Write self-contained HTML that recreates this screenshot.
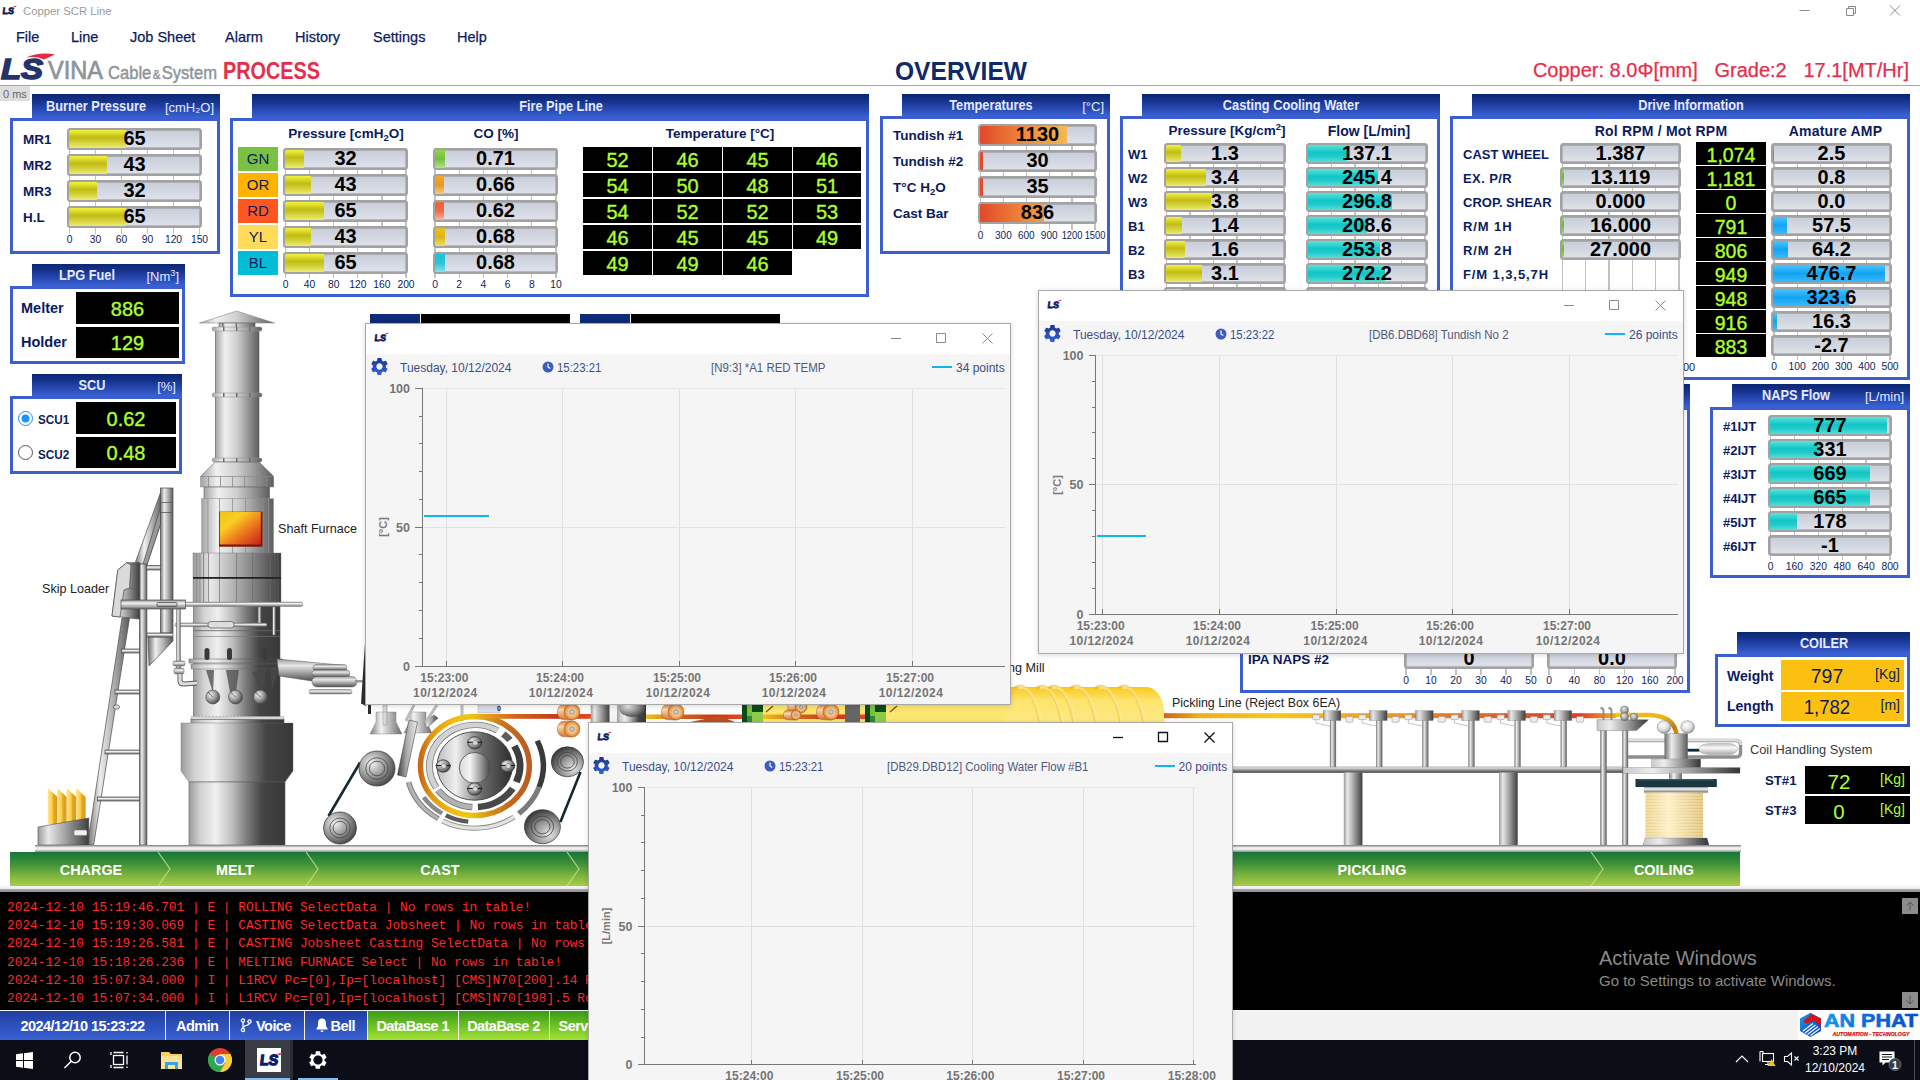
<!DOCTYPE html>
<html lang="en"><head><meta charset="utf-8"><title>Copper SCR Line</title>
<style>
html,body{margin:0;padding:0;background:#fff}
body{width:1920px;height:1080px;overflow:hidden;position:relative;font-family:"Liberation Sans",sans-serif}
#root{position:absolute;left:0;top:0;width:1920px;height:1080px;overflow:hidden;background:#fff}
#root div,#root svg{position:absolute;box-sizing:content-box}
#root span{position:relative}
.tab{background:linear-gradient(180deg,#0c2672 0%,#15328c 30%,#2a4cb8 70%,#3a62d4 100%)}
.pbody{border:3px solid #3b5fd0;background:#fff}
.g{border:2px solid #a2a2a2;border-radius:3.5px;background:linear-gradient(180deg,#c9cdd9 0,#d1d5e0 40%,#dfe2ea 100%);overflow:hidden;box-shadow:inset 0 0 0 .5px #8e8e8e}
.g i{position:absolute;left:0;top:0;bottom:0;display:block}
.g b{position:absolute;left:0;right:0;top:0;text-align:center;color:#000;font-weight:700}
.win{border:1px solid #a9a9a9;background:#f5f5f5;box-shadow:0 1px 5px rgba(0,0,0,.16);overflow:hidden}
</style></head><body><div id="root">
<div style="left:0px;top:0px;width:1920px;height:23px;background:#fff"></div>
<svg style="left:2px;top:4px" width="15" height="12" viewBox="0 0 44 26">
<g transform="skewX(-7)"><text x="4" y="24" font-family="Liberation Sans, sans-serif" font-size="27" font-weight="700" fill="#0b1b5e" stroke="#0b1b5e" stroke-width="2.4" textLength="33" lengthAdjust="spacingAndGlyphs">LS</text></g>
<path d="M31 3.500 Q38 0 44 0.500 L38 5 Q35 3 31 3.500Z" fill="#e8283c"/></svg>
<div style="left:23px;top:4.0px;line-height:15px;height:15px;font-size:11.3px;color:#9a9a9a;font-weight:400;white-space:nowrap;">Copper SCR Line</div>
<svg style="left:1780px;top:0" width="140" height="23" viewBox="0 0 140 23" fill="none" stroke="#8a8a8a" stroke-width="1">
<path d="M19.5 10.5h10"/><path d="M66.500 8.500h7v7h-7z M68.500 8.500v-2h7v7h-2"/><path d="M110 5.500l10 10M120 5.500l-10 10"/></svg>
<div style="left:16px;top:27.5px;line-height:19px;height:19px;font-size:14.5px;color:#0b1b5e;font-weight:400;white-space:nowrap;-webkit-text-stroke:0.25px #0b1b5e;">File</div>
<div style="left:71px;top:27.5px;line-height:19px;height:19px;font-size:14.5px;color:#0b1b5e;font-weight:400;white-space:nowrap;-webkit-text-stroke:0.25px #0b1b5e;">Line</div>
<div style="left:130px;top:27.5px;line-height:19px;height:19px;font-size:14.5px;color:#0b1b5e;font-weight:400;white-space:nowrap;-webkit-text-stroke:0.25px #0b1b5e;">Job Sheet</div>
<div style="left:225px;top:27.5px;line-height:19px;height:19px;font-size:14.5px;color:#0b1b5e;font-weight:400;white-space:nowrap;-webkit-text-stroke:0.25px #0b1b5e;">Alarm</div>
<div style="left:295px;top:27.5px;line-height:19px;height:19px;font-size:14.5px;color:#0b1b5e;font-weight:400;white-space:nowrap;-webkit-text-stroke:0.25px #0b1b5e;">History</div>
<div style="left:373px;top:27.5px;line-height:19px;height:19px;font-size:14.5px;color:#0b1b5e;font-weight:400;white-space:nowrap;-webkit-text-stroke:0.25px #0b1b5e;">Settings</div>
<div style="left:457px;top:27.5px;line-height:19px;height:19px;font-size:14.5px;color:#0b1b5e;font-weight:400;white-space:nowrap;-webkit-text-stroke:0.25px #0b1b5e;">Help</div>
<svg style="left:0;top:52px" width="330" height="34" viewBox="0 0 330 34">
<text x="1" y="26.500" font-family="Liberation Sans, sans-serif" font-size="30" font-weight="700" font-style="italic" fill="#26336a" stroke="#26336a" stroke-width="1.6" textLength="42" lengthAdjust="spacingAndGlyphs">LS</text>
<path d="M26 5.500 Q40 -0.500 55 2.500 L44 7.500 Q36 4 26 5.500Z" fill="#e8283c"/>
<text x="48" y="26.500" font-family="Liberation Sans, sans-serif" font-size="25" fill="#8e9499" stroke="#8e9499" stroke-width=".7" textLength="55" lengthAdjust="spacingAndGlyphs">VINA</text>
<text x="108" y="26.500" font-family="Liberation Sans, sans-serif" font-size="18" fill="#8e9499" stroke="#8e9499" stroke-width=".45" textLength="109" lengthAdjust="spacingAndGlyphs">Cable<tspan font-size="12.5" dx="1.5">&amp;</tspan><tspan dx="1.5">System</tspan></text>
<text x="223" y="26.500" font-family="Liberation Sans, sans-serif" font-size="23" font-weight="700" fill="#e62e4a" textLength="97" lengthAdjust="spacingAndGlyphs">PROCESS</text>
</svg>
<div style="left:810.5px;top:53.5px;line-height:34px;height:34px;font-size:26px;color:#10296b;font-weight:700;white-space:nowrap;width:300px;text-align:center;transform:scaleX(0.945);transform-origin:50% 50%;">OVERVIEW</div>
<div style="left:1409px;top:56.5px;line-height:26px;height:26px;font-size:20px;color:#e62e4a;font-weight:400;white-space:nowrap;width:500px;text-align:right;-webkit-text-stroke:.25px #e62e4a;">Copper: 8.0Φ[mm]&nbsp;&nbsp; Grade:2&nbsp;&nbsp; 17.1[MT/Hr]</div>
<div style="left:0px;top:85px;width:1920px;height:1px;background:#a8a8a8"></div>
<div style="left:0px;top:86px;width:30px;height:15px;background:#dedede"></div>
<div style="left:3px;top:87.0px;line-height:14px;height:14px;font-size:11px;color:#666;font-weight:400;white-space:nowrap;">0 ms</div>
<svg style="left:0;top:290px" width="1920" height="570" viewBox="0 290 1920 570">
<defs>
<linearGradient id="mL" x1="0" x2="1" y1="0" y2="0"><stop offset="0" stop-color="#a2a2a2"/><stop offset=".22" stop-color="#f0f0f0"/><stop offset=".5" stop-color="#cecece"/><stop offset="1" stop-color="#5e5e5e"/></linearGradient>
<linearGradient id="mM" x1="0" x2="1" y1="0" y2="0"><stop offset="0" stop-color="#9a9a9a"/><stop offset=".2" stop-color="#e8e8e8"/><stop offset=".55" stop-color="#a0a0a0"/><stop offset="1" stop-color="#3e3e3e"/></linearGradient>
<linearGradient id="mD" x1="0" x2="1" y1="0" y2="0"><stop offset="0" stop-color="#9c9c9c"/><stop offset=".12" stop-color="#d2d2d2"/><stop offset=".28" stop-color="#f0f0f0"/><stop offset=".45" stop-color="#bebebe"/><stop offset=".6" stop-color="#7e7e7e"/><stop offset=".76" stop-color="#444444"/><stop offset="1" stop-color="#383838"/></linearGradient>
<linearGradient id="mP" x1="0" x2="1" y1="0" y2="0"><stop offset="0" stop-color="#7c7c7c"/><stop offset=".35" stop-color="#f2f2f2"/><stop offset="1" stop-color="#6a6a6a"/></linearGradient>
<linearGradient id="mPd" x1="0" x2="1" y1="0" y2="0"><stop offset="0" stop-color="#6e6e6e"/><stop offset=".3" stop-color="#ededed"/><stop offset=".6" stop-color="#b4b4b4"/><stop offset="1" stop-color="#5a5a5a"/></linearGradient>
<linearGradient id="mHd" x1="0" x2="1" y1="0" y2="0"><stop offset="0" stop-color="#c8c8c8"/><stop offset=".25" stop-color="#ededed"/><stop offset=".6" stop-color="#9a9a9a"/><stop offset="1" stop-color="#343434"/></linearGradient>
<linearGradient id="mVl" x1="0" x2="0" y1="0" y2="1"><stop offset="0" stop-color="#bdbdbd"/><stop offset=".4" stop-color="#fafafa"/><stop offset="1" stop-color="#a8a8a8"/></linearGradient>
<linearGradient id="mRail" x1="0" x2="0" y1="0" y2="1"><stop offset="0" stop-color="#b4b4b4"/><stop offset=".25" stop-color="#dadada"/><stop offset=".6" stop-color="#8c8c8c"/><stop offset="1" stop-color="#3e3e3e"/></linearGradient>
<linearGradient id="wcv" x1="0" x2="1" y1="0" y2="1"><stop offset="0" stop-color="#f2c41c"/><stop offset=".45" stop-color="#eab21a"/><stop offset=".75" stop-color="#c07c10"/><stop offset="1" stop-color="#e29a14"/></linearGradient>
<radialGradient id="pulM" cx=".4" cy=".35" r=".7"><stop offset="0" stop-color="#e8e8e8"/><stop offset=".6" stop-color="#a4a4a4"/><stop offset="1" stop-color="#5c5c5c"/></radialGradient>
<radialGradient id="pulL" cx=".4" cy=".35" r=".7"><stop offset="0" stop-color="#ffffff"/><stop offset=".6" stop-color="#dcdcdc"/><stop offset="1" stop-color="#8c8c8c"/></radialGradient>
<linearGradient id="mV" x1="0" x2="0" y1="0" y2="1"><stop offset="0" stop-color="#8a8a8a"/><stop offset=".35" stop-color="#f4f4f4"/><stop offset="1" stop-color="#6e6e6e"/></linearGradient>
<linearGradient id="mVd" x1="0" x2="0" y1="0" y2="1"><stop offset="0" stop-color="#9a9a9a"/><stop offset=".3" stop-color="#e8e8e8"/><stop offset="1" stop-color="#505050"/></linearGradient>
<linearGradient id="fire" x1="0" x2="1" y1="0" y2="1"><stop offset="0" stop-color="#f4c01c"/><stop offset=".3" stop-color="#f8d020"/><stop offset=".6" stop-color="#ee7a1c"/><stop offset="1" stop-color="#c4201c"/></linearGradient>
<linearGradient id="cath" x1="0" x2="1" y1="0" y2="0"><stop offset="0" stop-color="#ffe896"/><stop offset=".5" stop-color="#fbc83c"/><stop offset="1" stop-color="#e39a1c"/></linearGradient>
<linearGradient id="ring" x1="0" x2="1" y1="0" y2="0"><stop offset="0" stop-color="#c86818"/><stop offset=".1" stop-color="#e09814"/><stop offset=".3" stop-color="#f4bc10"/><stop offset=".46" stop-color="#ecc810"/><stop offset=".62" stop-color="#d8961a"/><stop offset=".82" stop-color="#c4681e"/><stop offset="1" stop-color="#bc5c20"/></linearGradient>
<linearGradient id="bar" x1="0" x2="1" y1="0" y2="0"><stop offset="0" stop-color="#f0c018"/><stop offset=".35" stop-color="#d4641c"/><stop offset=".7" stop-color="#c8381c"/><stop offset="1" stop-color="#e84a24"/></linearGradient>
<linearGradient id="wire" x1="0" x2="1" y1="0" y2="0"><stop offset="0" stop-color="#d4601c"/><stop offset=".08" stop-color="#f0b018"/><stop offset=".25" stop-color="#f4c81c"/><stop offset=".5" stop-color="#ee9a20"/><stop offset=".75" stop-color="#e05a28"/><stop offset=".92" stop-color="#e23c28"/><stop offset="1" stop-color="#f0b018"/></linearGradient>
<linearGradient id="tube" x1="0" x2="0" y1="0" y2="1"><stop offset="0" stop-color="#f8c81c"/><stop offset=".25" stop-color="#fde46c"/><stop offset="1" stop-color="#fcec98"/></linearGradient>
<radialGradient id="pul" cx=".35" cy=".35" r=".75"><stop offset="0" stop-color="#f4f4f4"/><stop offset=".5" stop-color="#9a9a9a"/><stop offset="1" stop-color="#3a3a3a"/></radialGradient>
<radialGradient id="pulR" cx=".68" cy=".72" r=".8"><stop offset="0" stop-color="#e6e6e6"/><stop offset=".45" stop-color="#9a9a9a"/><stop offset="1" stop-color="#2e2e2e"/></radialGradient>
<linearGradient id="mTb" x1="0" x2="1" y1="0" y2="0"><stop offset="0" stop-color="#3c3c3c"/><stop offset=".45" stop-color="#a8a8a8"/><stop offset="1" stop-color="#ececec"/></linearGradient>
<linearGradient id="rollB" x1="0" x2="0" y1="0" y2="1"><stop offset="0" stop-color="#d87830"/><stop offset=".35" stop-color="#fad8b0"/><stop offset="1" stop-color="#d0702c"/></linearGradient>
<linearGradient id="disc" x1="0" x2="1" y1="0" y2="0"><stop offset="0" stop-color="#bcbcbc"/><stop offset=".25" stop-color="#f0f0f0"/><stop offset=".6" stop-color="#6a6a6a"/><stop offset="1" stop-color="#2c2c2c"/></linearGradient>
<linearGradient id="hub" x1="0" x2="1" y1="0" y2="0"><stop offset="0" stop-color="#d8d8d8"/><stop offset=".35" stop-color="#f4f4f4"/><stop offset="1" stop-color="#4a4a4a"/></linearGradient>
<radialGradient id="roll" cx=".5" cy=".5" r=".5"><stop offset="0" stop-color="#8a8a8a"/><stop offset=".22" stop-color="#d0d0d0"/><stop offset=".3" stop-color="#f8d8a8"/><stop offset=".7" stop-color="#f0a860"/><stop offset="1" stop-color="#d87830"/></radialGradient>
<linearGradient id="coil" x1="0" x2="1" y1="0" y2="0"><stop offset="0" stop-color="#e8cc84"/><stop offset=".4" stop-color="#fcf0c4"/><stop offset="1" stop-color="#dcbc70"/></linearGradient>
</defs>
<path d="M199.500 323 L236.700 311 L274.500 323 Z" fill="url(#mL)" stroke="#8a8a8a" stroke-width=".6"/>
<rect x="219" y="323" width="36" height="5" fill="url(#mL)" stroke="#5a5a5a" stroke-width=".6"/>
<rect x="222" y="323" width="1.600" height="5" fill="#777"/>
<rect x="235.5" y="323" width="1.600" height="5" fill="#777"/>
<rect x="249" y="323" width="1.600" height="5" fill="#777"/>
<rect x="215.300" y="329" width="43.700" height="131" fill="url(#mL)" stroke="#5a5a5a" stroke-width=".6"/>
<rect x="212" y="327" width="50" height="4" rx="2" fill="url(#mL)" stroke="#8c8c8c" stroke-width=".5"/>
<rect x="223" y="327" width="1.500" height="4" fill="#6e6e6e"/>
<rect x="236" y="327" width="1.500" height="4" fill="#6e6e6e"/>
<rect x="249" y="327" width="1.500" height="4" fill="#6e6e6e"/>
<rect x="212" y="393" width="50" height="4" rx="2" fill="url(#mL)" stroke="#8c8c8c" stroke-width=".5"/>
<rect x="223" y="393" width="1.500" height="4" fill="#6e6e6e"/>
<rect x="236" y="393" width="1.500" height="4" fill="#6e6e6e"/>
<rect x="249" y="393" width="1.500" height="4" fill="#6e6e6e"/>
<rect x="212" y="458" width="50" height="4" rx="2" fill="url(#mL)" stroke="#8c8c8c" stroke-width=".5"/>
<rect x="223" y="458" width="1.500" height="4" fill="#6e6e6e"/>
<rect x="236" y="458" width="1.500" height="4" fill="#6e6e6e"/>
<rect x="249" y="458" width="1.500" height="4" fill="#6e6e6e"/>
<path d="M215.300 462 L259 462 L273.800 476.500 L200.500 476.500 Z" fill="url(#mL)" stroke="#5a5a5a" stroke-width=".6"/>
<rect x="200.500" y="476.500" width="73.300" height="10.500" fill="url(#mL)" stroke="#8c8c8c" stroke-width=".5"/>
<rect x="208" y="476.500" width=".8" height="10.500" fill="#8a8a8a"/>
<rect x="220" y="476.500" width=".8" height="10.500" fill="#8a8a8a"/>
<rect x="232" y="476.500" width=".8" height="10.500" fill="#8a8a8a"/>
<rect x="244" y="476.500" width=".8" height="10.500" fill="#8a8a8a"/>
<rect x="256" y="476.500" width=".8" height="10.500" fill="#8a8a8a"/>
<rect x="266" y="476.500" width=".8" height="10.500" fill="#8a8a8a"/>
<rect x="204" y="487" width="65.500" height="12" fill="url(#mL)" stroke="#5a5a5a" stroke-width=".6"/>
<rect x="201.400" y="498.600" width="72.200" height="55" fill="url(#mL)" stroke="#9a9a9a" stroke-width=".4"/>
<rect x="207.5" y="498.600" width=".8" height="55" fill="#8e8e8e"/>
<rect x="219" y="498.600" width=".8" height="55" fill="#8e8e8e"/>
<rect x="232" y="498.600" width=".8" height="55" fill="#8e8e8e"/>
<rect x="245" y="498.600" width=".8" height="55" fill="#8e8e8e"/>
<rect x="262.5" y="498.600" width=".8" height="55" fill="#8e8e8e"/>
<rect x="268" y="498.600" width=".8" height="55" fill="#8e8e8e"/>
<rect x="219" y="511.700" width="43.500" height="35" fill="#7c1410"/>
<rect x="219.800" y="512" width="41" height="32.500" fill="url(#fire)"/>
<rect x="193" y="553" width="88" height="50" fill="url(#mM)" stroke="#777" stroke-width=".4"/>
<rect x="196.5" y="553" width=".8" height="50" fill="#6a6a6a" opacity=".8"/>
<rect x="199.5" y="553" width=".8" height="50" fill="#6a6a6a" opacity=".8"/>
<rect x="203" y="553" width=".8" height="50" fill="#6a6a6a" opacity=".8"/>
<rect x="208" y="553" width=".8" height="50" fill="#6a6a6a" opacity=".8"/>
<rect x="219" y="553" width=".8" height="50" fill="#6a6a6a" opacity=".8"/>
<rect x="236" y="553" width=".8" height="50" fill="#6a6a6a" opacity=".8"/>
<rect x="252" y="553" width=".8" height="50" fill="#6a6a6a" opacity=".8"/>
<rect x="263" y="553" width=".8" height="50" fill="#6a6a6a" opacity=".8"/>
<rect x="270" y="553" width=".8" height="50" fill="#6a6a6a" opacity=".8"/>
<rect x="274.5" y="553" width=".8" height="50" fill="#6a6a6a" opacity=".8"/>
<rect x="277.5" y="553" width=".8" height="50" fill="#6a6a6a" opacity=".8"/>
<rect x="193" y="577" width="88" height="1.800" fill="#222"/>
<rect x="193.500" y="603" width="86.500" height="115" fill="url(#mD)" stroke="#5a5a5a" stroke-width=".6"/>
<rect x="193.500" y="630" width="86.500" height="1.200" fill="#666" opacity=".7"/><rect x="193.500" y="636" width="86.500" height="1" fill="#777" opacity=".6"/>
<rect x="189" y="659" width="93.500" height="4" fill="url(#mD)" stroke="#555" stroke-width=".5"/><rect x="191" y="664" width="89.500" height="5" fill="url(#mD)" stroke="#666" stroke-width=".4"/>
<rect x="204.5" y="648" width="5" height="12" rx="2.500" fill="#3a3a3a"/>
<rect x="227.0" y="648" width="5" height="12" rx="2.500" fill="#3a3a3a"/>
<rect x="262.5" y="648" width="5" height="12" rx="2.500" fill="#3a3a3a"/>
<path d="M206 670 L214 670 L213 693 Z M226 670 L239 670 L236 692 L230 692 Z M252 672 L266 670 L262 692 Z M270 668 L281 664 L272 690 Z" fill="#4a4a4a" opacity=".75"/>
<circle cx="212.8" cy="697" r="7" fill="url(#pul)" stroke="#444" stroke-width=".6"/><path d="M207.8 692 L212.8 697" stroke="#444" stroke-width=".8"/>
<circle cx="235.5" cy="697" r="7" fill="url(#pul)" stroke="#444" stroke-width=".6"/><path d="M230.5 692 L235.5 697" stroke="#444" stroke-width=".8"/>
<circle cx="260.4" cy="697" r="7" fill="url(#pul)" stroke="#444" stroke-width=".6"/><path d="M255.39999999999998 692 L260.4 697" stroke="#444" stroke-width=".8"/>
<rect x="191" y="716.400" width="93" height="3" fill="#d8d8d8" stroke="#777" stroke-width=".4" stroke-dasharray="2 1.500"/><rect x="191" y="719.500" width="93" height="4" fill="url(#mD)" stroke="#5a5a5a" stroke-width=".6"/>
<path d="M181 723 L293 723 L293 771 L285 782 L189 782 L181 771 Z" fill="url(#mD)" stroke="#666" stroke-width=".4"/>
<rect x="189" y="782" width="96" height="63" fill="url(#mD)" stroke="#5a5a5a" stroke-width=".6"/>
<rect x="156" y="602" width="147" height="4.500" rx="2.200" fill="url(#mV)" stroke="#777" stroke-width=".4"/>
<rect x="175" y="623" width="92" height="3.600" rx="1.800" fill="url(#mV)" stroke="#666" stroke-width=".5"/>
<rect x="208" y="621.500" width="26" height="6.500" rx="3" fill="#ddd" stroke="#555" stroke-width=".7"/>
<rect x="176.500" y="608" width="4" height="60" fill="url(#mP)" stroke="#666" stroke-width=".4"/><rect x="173" y="661" width="12" height="5" rx="2" fill="url(#mV)" stroke="#555" stroke-width=".5"/><rect x="174" y="668" width="10" height="6" rx="2" fill="url(#mV)" stroke="#555" stroke-width=".5"/>
<path d="M180 674 L180 681 Q180 684 184 684 L197 683" fill="none" stroke="#555" stroke-width="5"/><path d="M180 674 L180 681 Q180 684 184 684 L197 683" fill="none" stroke="#ddd" stroke-width="3.200"/>
<rect x="258" y="607" width="3" height="16" fill="url(#mP)" stroke="#666" stroke-width=".4"/><rect x="272.500" y="607" width="3" height="28" fill="url(#mP)" stroke="#666" stroke-width=".4"/>
<path d="M277 659 L340 665 L340 673 L312 681 L279 676 Z" fill="url(#mVd)" stroke="#555" stroke-width=".5"/>
<rect x="313" y="664.500" width="34" height="6" rx="3" fill="url(#mVd)" stroke="#555" stroke-width=".4"/><rect x="312" y="670" width="38" height="7" rx="3.500" fill="url(#mVd)" stroke="#555" stroke-width=".4"/><rect x="312" y="676.500" width="45" height="10.500" rx="5" fill="url(#mVd)" stroke="#555" stroke-width=".4"/><rect x="309" y="689.500" width="43" height="4.500" rx="2" fill="url(#mV)" stroke="#666" stroke-width=".4"/><rect x="355" y="680" width="12" height="2.500" fill="#999"/>
<path d="M160.400 493 L135.500 562 L146.700 565.500 L160.400 524.400 Z" fill="url(#mP)" stroke="#4e4e4e" stroke-width=".7"/>
<path d="M160.400 508 L160.400 524.400 L146.700 565.500 L143 564 Z" fill="#9a9a9a" stroke="#4e4e4e" stroke-width=".7"/>
<rect x="160.400" y="488" width="12.600" height="145" fill="url(#mPd)" stroke="#4e4e4e" stroke-width=".7"/>
<rect x="160.400" y="502" width="12.600" height=".8" fill="#555"/><rect x="160.400" y="512" width="12.600" height=".8" fill="#555"/>
<path d="M148 637 L173 637 L173 641 L149 666 Z" fill="url(#mPd)" stroke="#4e4e4e" stroke-width=".7"/>
<rect x="139.500" y="633" width="33.500" height="4" rx="1.500" fill="url(#mV)" stroke="#4e4e4e" stroke-width=".7"/>
<rect x="139.500" y="564" width="7.400" height="281" fill="url(#mPd)" stroke="#4e4e4e" stroke-width=".7"/>
<rect x="146.700" y="565.500" width="14" height="4.500" fill="url(#mV)" stroke="#4e4e4e" stroke-width=".7"/>
<path d="M122 618 L129.500 618 L93.700 845 L87.400 845 Z" fill="url(#mPd)" stroke="#4e4e4e" stroke-width=".7"/>
<rect x="121.5" y="649" width="18.0" height="4" fill="url(#mV)" stroke="#4e4e4e" stroke-width=".7"/>
<rect x="115" y="690" width="24.5" height="4" fill="url(#mV)" stroke="#4e4e4e" stroke-width=".7"/>
<rect x="105" y="750" width="34.5" height="4" fill="url(#mV)" stroke="#4e4e4e" stroke-width=".7"/>
<rect x="97.5" y="797" width="42.0" height="4" fill="url(#mV)" stroke="#4e4e4e" stroke-width=".7"/>
<rect x="113.500" y="705" width="6" height="4" rx="2" fill="#ddd" stroke="#4e4e4e" stroke-width=".7"/>
<path d="M117.800 570 L126.700 562.700 L139.500 562.700 L139.500 619 L112 616 Z" fill="url(#mM)" stroke="#4e4e4e" stroke-width=".7"/>
<path d="M117.800 570 L126.700 562.700 L131 565 L129.500 588 L124 590 L120 617 L112 616Z" fill="#dadada" stroke="#4e4e4e" stroke-width=".7"/><path d="M131 565 L139.500 562.700 M129.500 588 L139.500 590" stroke="#555" stroke-width=".6"/>
<rect x="121" y="600" width="64.500" height="9" fill="url(#mV)" stroke="#4e4e4e" stroke-width=".7"/>
<rect x="157" y="602.500" width="20" height="4" rx="1" fill="url(#mV)" stroke="#4e4e4e" stroke-width=".7"/>
<path d="M47.8 788 L57.3 797 L57.3 824 L47.8 824 Z" fill="url(#cath)"/><path d="M52.8 793 L57.3 797 L57.3 824 L53.3 824Z" fill="#d8941c" opacity=".55"/>
<path d="M57.199999999999996 788 L66.69999999999999 797 L66.69999999999999 824 L57.199999999999996 824 Z" fill="url(#cath)"/><path d="M62.199999999999996 793 L66.69999999999999 797 L66.69999999999999 824 L62.699999999999996 824Z" fill="#d8941c" opacity=".55"/>
<path d="M66.6 788 L76.1 797 L76.1 824 L66.6 824 Z" fill="url(#cath)"/><path d="M71.6 793 L76.1 797 L76.1 824 L72.1 824Z" fill="#d8941c" opacity=".55"/>
<path d="M76.0 788 L85.5 797 L85.5 824 L76.0 824 Z" fill="url(#cath)"/><path d="M81.0 793 L85.5 797 L85.5 824 L81.5 824Z" fill="#d8941c" opacity=".55"/>
<path d="M38 827 L88.800 818 L88.800 845 L38 845 Z" fill="url(#mM)" stroke="#4e4e4e" stroke-width=".6"/>
<rect x="74" y="830" width="13" height="5.500" rx="1.500" fill="#f0f0f0" stroke="#777" stroke-width=".5"/>
<path d="M365.300 639 L366 639 L366 706 L361 703.500 Z" fill="#2c2c2c"/><rect x="368" y="704" width="3" height="10" fill="#2c2c2c"/>
<path d="M383 705 h4 v20 h-4z M388 712 h8 v10 l6 12 h-32 l6 -12 v-10 h8z" fill="url(#mP)" stroke="#777" stroke-width=".4"/>
<path d="M419 712 h7 v9 l6 12 h-28 l6 -12 v-9z" fill="url(#mP)" stroke="#777" stroke-width=".4"/>
<path d="M409 720 L417.500 722 L406 777 L397.500 775 Z" fill="url(#mTb)" stroke="#444" stroke-width=".6"/>
<path d="M424 722 L434 715 L438 718 L427 728Z" fill="url(#mM)" stroke="#555" stroke-width=".5"/>
<path d="M414 705 l-8 16 M437 705 l-12 18 M462 705 v16" stroke="#bbb" stroke-width="3"/>
<rect x="478" y="705" width="22" height="8" fill="#d8dcec" stroke="#999" stroke-width=".4"/>
<path d="M328.500 816 L360 762.500 M560.400 822 L580.500 772" stroke="#142832" stroke-width="2.600"/>
<ellipse cx="377" cy="768.5" rx="18" ry="17.5" fill="url(#pul)" stroke="#333" stroke-width=".7"/><ellipse cx="377" cy="768.5" rx="11.2" ry="10.8" fill="none" stroke="#444" stroke-width=".8"/><ellipse cx="377" cy="768.5" rx="7.6" ry="7.3" fill="none" stroke="#444" stroke-width=".8"/>
<ellipse cx="340" cy="828" rx="16.5" ry="16" fill="url(#pul)" stroke="#333" stroke-width=".7"/><ellipse cx="340" cy="828" rx="10.2" ry="9.9" fill="none" stroke="#444" stroke-width=".8"/><ellipse cx="340" cy="828" rx="6.9" ry="6.7" fill="none" stroke="#444" stroke-width=".8"/>
<ellipse cx="567.4" cy="761.8" rx="16.1" ry="15" fill="url(#pulR)" stroke="#333" stroke-width=".7"/><ellipse cx="567.4" cy="761.8" rx="10.0" ry="9.3" fill="none" stroke="#444" stroke-width=".8"/><ellipse cx="567.4" cy="761.8" rx="6.8" ry="6.3" fill="none" stroke="#444" stroke-width=".8"/>
<ellipse cx="542.4" cy="826.7" rx="18" ry="17" fill="url(#pulR)" stroke="#333" stroke-width=".7"/><ellipse cx="542.4" cy="826.7" rx="11.2" ry="10.5" fill="none" stroke="#444" stroke-width=".8"/><ellipse cx="542.4" cy="826.7" rx="7.6" ry="7.1" fill="none" stroke="#444" stroke-width=".8"/>
<g transform="translate(474.7 766) scale(1 0.908)">
<path d="M62.6 -27.9 A68.5 68.5 0 0 1 64.4 23.4" fill="none" stroke="#3a3a3a" stroke-width="5.5" />
<path d="M64.4 23.4 A68.5 68.5 0 0 1 44.0 52.5" fill="none" stroke="#7c7c7c" stroke-width="5.5" />
<path d="M39.3 56.1 A68.5 68.5 0 0 1 -32.2 60.5" fill="none" stroke="#8e8e8e" stroke-width="5.5" />
<path d="M39.3 56.1 A68.5 68.5 0 0 1 -32.2 60.5" fill="none" stroke="#e2e2e2" stroke-width="3.6" />
<path d="M-36.3 58.1 A68.5 68.5 0 0 1 -66.2 17.7" fill="none" stroke="#7e7e7e" stroke-width="5.5" />
<path d="M-36.3 58.1 A68.5 68.5 0 0 1 -66.2 17.7" fill="none" stroke="#b4b4b4" stroke-width="3.4" />
<path d="M-6.4 61.2 A61.5 61.5 0 0 1 -28.9 54.3" fill="none" stroke="#5a5a5a" stroke-width="4.6" />
<path d="M-32.6 52.2 A61.5 61.5 0 0 1 -51.0 34.4" fill="none" stroke="#8a8a8a" stroke-width="4.6" />
<path d="M-38.4 24.0 A45.3 45.3 0 0 1 22.7 -39.2" fill="none" stroke="#7a7a7a" stroke-width="7" />
<path d="M-38.4 24.0 A45.3 45.3 0 0 1 22.7 -39.2" fill="none" stroke="#d2d2d2" stroke-width="5.4" />
<path d="M28.5 -35.2 A45.3 45.3 0 0 1 35.2 -28.5" fill="none" stroke="#5c5c5c" stroke-width="7" />
<path d="M39.6 -22.0 A45.3 45.3 0 0 1 41.7 17.7" fill="none" stroke="#3e3e3e" stroke-width="7" />
<path d="M38.0 24.7 A45.3 45.3 0 0 1 3.2 45.2" fill="none" stroke="#484848" stroke-width="7" />
<path d="M-2.4 45.2 A45.3 45.3 0 0 1 -36.6 26.6" fill="none" stroke="#6e6e6e" stroke-width="7" />
<path d="M-2.4 45.2 A45.3 45.3 0 0 1 -36.6 26.6" fill="none" stroke="#b2b2b2" stroke-width="5.4" />
<circle cx="0" cy="0" r="37.700" fill="url(#disc)" stroke="#3a3a3a" stroke-width=".9"/>
</g>
<circle cx="474.7" cy="767.8" r="15.400" fill="url(#hub)" stroke="#4a4a4a" stroke-width=".8"/>
<ellipse cx="474.7" cy="742.8" rx="7" ry="6.200" fill="url(#pul)" stroke="#2c2c2c" stroke-width=".7"/><path d="M467.2 742.3 h15" stroke="#1c1c1c" stroke-width="1.100"/><circle cx="475.2" cy="742.8" r="2.600" fill="#d8d8d8" stroke="#555" stroke-width=".5"/>
<ellipse cx="474.7" cy="789" rx="7" ry="6.200" fill="url(#pul)" stroke="#2c2c2c" stroke-width=".7"/><path d="M467.2 788.5 h15" stroke="#1c1c1c" stroke-width="1.100"/><circle cx="475.2" cy="789" r="2.600" fill="#d8d8d8" stroke="#555" stroke-width=".5"/>
<ellipse cx="443.2" cy="766" rx="7" ry="6.200" fill="url(#pul)" stroke="#2c2c2c" stroke-width=".7"/><path d="M435.7 765.5 h15" stroke="#1c1c1c" stroke-width="1.100"/><circle cx="443.7" cy="766" r="2.600" fill="#d8d8d8" stroke="#555" stroke-width=".5"/>
<ellipse cx="507.7" cy="766" rx="7" ry="6.200" fill="url(#pul)" stroke="#2c2c2c" stroke-width=".7"/><path d="M500.2 765.5 h15" stroke="#1c1c1c" stroke-width="1.100"/><circle cx="508.2" cy="766" r="2.600" fill="#d8d8d8" stroke="#555" stroke-width=".5"/>
<ellipse cx="474.9" cy="766" rx="54.400" ry="49.400" fill="none" stroke="url(#ring)" stroke-width="5.500"/>
<rect x="472" y="714" width="122" height="4.800" fill="url(#bar)"/>
<text x="497" y="711" font-family="Liberation Sans, sans-serif" font-size="7" font-weight="700" fill="#0b1b5e">0</text>
<path d="M563 704.4 L572 704 L572 720 L563 719.6 A5.6 7.6 0 0 1 563 704.4Z" fill="url(#rollB)" stroke="#a05a20" stroke-width=".5"/><circle cx="572" cy="712" r="8" fill="url(#roll)" stroke="#a05a20" stroke-width=".5"/><circle cx="572" cy="712" r="2.4" fill="#c8c8c8" stroke="#666" stroke-width=".5"/>
<path d="M563 721.4 L572 721 L572 737 L563 736.6 A5.6 7.6 0 0 1 563 721.4Z" fill="url(#rollB)" stroke="#a05a20" stroke-width=".5"/><circle cx="572" cy="729" r="8" fill="url(#roll)" stroke="#a05a20" stroke-width=".5"/><circle cx="572" cy="729" r="2.4" fill="#c8c8c8" stroke="#666" stroke-width=".5"/>
<rect x="590.700" y="700" width="19" height="30" fill="url(#mM)"/><rect x="609.700" y="700" width="8" height="30" fill="#f4f4f4"/><rect x="617" y="700" width="29" height="30" fill="url(#mD)"/><ellipse cx="632" cy="708" rx="13" ry="9" fill="url(#pul)"/>
<rect x="646" y="714.500" width="100" height="4.500" fill="url(#bar)"/>
<path d="M667 704.4 L676 704 L676 720 L667 719.6 A5.6 7.6 0 0 1 667 704.4Z" fill="url(#rollB)" stroke="#a05a20" stroke-width=".5"/><circle cx="676" cy="712" r="8" fill="url(#roll)" stroke="#a05a20" stroke-width=".5"/><circle cx="676" cy="712" r="2.4" fill="#c8c8c8" stroke="#666" stroke-width=".5"/>
<path d="M690 722 L720 716 L735 722 Z" fill="#c0501c"/>
<rect x="742" y="700" width="268" height="60" fill="#fce670"/>
<rect x="742" y="700" width="21" height="40" fill="#0c4a1c"/><rect x="747" y="700" width="5" height="16" fill="#7ac040"/><rect x="752" y="712" width="11" height="10" fill="#8ccc48"/><rect x="747" y="716" width="5" height="6" fill="#2c8a34"/>
<rect x="865" y="700" width="21" height="40" fill="#0c4a1c"/><rect x="870" y="700" width="5" height="16" fill="#7ac040"/><rect x="875" y="712" width="11" height="10" fill="#8ccc48"/><rect x="870" y="716" width="5" height="6" fill="#2c8a34"/>
<rect x="763" y="714.500" width="102" height="4.500" fill="url(#bar)"/>
<path d="M792 701.3 L801 701 L801 713 L792 712.7 A4.2 5.7 0 0 1 792 701.3Z" fill="url(#rollB)" stroke="#a05a20" stroke-width=".5"/><circle cx="801" cy="707" r="6" fill="url(#roll)" stroke="#a05a20" stroke-width=".5"/><circle cx="801" cy="707" r="1.8" fill="#c8c8c8" stroke="#666" stroke-width=".5"/>
<path d="M787 710.2 L796 710 L796 720 L787 719.8 A3.5 4.8 0 0 1 787 710.2Z" fill="url(#rollB)" stroke="#a05a20" stroke-width=".5"/><circle cx="796" cy="715" r="5" fill="url(#roll)" stroke="#a05a20" stroke-width=".5"/><circle cx="796" cy="715" r="1.5" fill="#c8c8c8" stroke="#666" stroke-width=".5"/>
<path d="M822 704.4 L831 704 L831 720 L822 719.6 A5.6 7.6 0 0 1 822 704.4Z" fill="url(#rollB)" stroke="#a05a20" stroke-width=".5"/><circle cx="831" cy="712" r="8" fill="url(#roll)" stroke="#a05a20" stroke-width=".5"/><circle cx="831" cy="712" r="2.4" fill="#c8c8c8" stroke="#666" stroke-width=".5"/>
<rect x="845" y="704" width="15" height="18" fill="#666"/>
<path d="M766 712 l7 -6 M890 712 l7 -6" stroke="#7a4a10" stroke-width="1.200"/>
<path d="M1005 687 L1148 687 Q1163 691 1164.500 714 L1164.500 740 L1005 740 Z" fill="url(#tube)"/>
<path d="M1014 688 q8 -5 14 3 q10 14 12 36" fill="none" stroke="#f0b010" stroke-width="2.500" opacity=".6"/><path d="M1018 688 q7 -2 12 5 q9 14 11 34" fill="none" stroke="#fff4b8" stroke-width="2.500" opacity=".6"/>
<path d="M1036 688 q8 -5 14 3 q10 14 12 36" fill="none" stroke="#f0b010" stroke-width="2.500" opacity=".6"/><path d="M1040 688 q7 -2 12 5 q9 14 11 34" fill="none" stroke="#fff4b8" stroke-width="2.500" opacity=".6"/>
<path d="M1048 688 q8 -5 14 3 q10 14 12 36" fill="none" stroke="#f0b010" stroke-width="2.500" opacity=".6"/><path d="M1052 688 q7 -2 12 5 q9 14 11 34" fill="none" stroke="#fff4b8" stroke-width="2.500" opacity=".6"/>
<path d="M1070 688 q8 -5 14 3 q10 14 12 36" fill="none" stroke="#f0b010" stroke-width="2.500" opacity=".6"/><path d="M1074 688 q7 -2 12 5 q9 14 11 34" fill="none" stroke="#fff4b8" stroke-width="2.500" opacity=".6"/>
<path d="M1095 688 q8 -5 14 3 q10 14 12 36" fill="none" stroke="#f0b010" stroke-width="2.500" opacity=".6"/><path d="M1099 688 q7 -2 12 5 q9 14 11 34" fill="none" stroke="#fff4b8" stroke-width="2.500" opacity=".6"/>
<path d="M1118 688 q8 -5 14 3 q10 14 12 36" fill="none" stroke="#f0b010" stroke-width="2.500" opacity=".6"/><path d="M1122 688 q7 -2 12 5 q9 14 11 34" fill="none" stroke="#fff4b8" stroke-width="2.500" opacity=".6"/>
<rect x="1164" y="713.200" width="452" height="5" fill="url(#wire)"/>
<rect x="1232" y="766.500" width="392" height="6.300" fill="url(#mRail)"/>
<rect x="1330.0" y="720" width="6" height="47" fill="url(#mPd)" stroke="#8a8a8a" stroke-width=".3"/>
<rect x="1323.2" y="710.600" width="17.700" height="10" fill="url(#mM)" stroke="#777" stroke-width=".3"/>
<rect x="1312.5" y="714.800" width="7.300" height="4.800" rx="1" fill="#ececec" stroke="#8a8a8a" stroke-width=".5"/><rect x="1345.8" y="716.400" width="7.200" height="5.800" rx="1" fill="#ececec" stroke="#8a8a8a" stroke-width=".5"/>
<path d="M1316.0 719.600 v3.500 l14 3" fill="none" stroke="#b4b4b4" stroke-width=".8"/>
<rect x="1376.2" y="720" width="6" height="47" fill="url(#mPd)" stroke="#8a8a8a" stroke-width=".3"/>
<rect x="1369.4" y="710.600" width="17.700" height="10" fill="url(#mM)" stroke="#777" stroke-width=".3"/>
<rect x="1358.7" y="714.800" width="7.300" height="4.800" rx="1" fill="#ececec" stroke="#8a8a8a" stroke-width=".5"/><rect x="1392.0" y="716.400" width="7.200" height="5.800" rx="1" fill="#ececec" stroke="#8a8a8a" stroke-width=".5"/>
<path d="M1362.2 719.600 v3.500 l14 3" fill="none" stroke="#b4b4b4" stroke-width=".8"/>
<rect x="1422.3" y="720" width="6" height="47" fill="url(#mPd)" stroke="#8a8a8a" stroke-width=".3"/>
<rect x="1415.5" y="710.600" width="17.700" height="10" fill="url(#mM)" stroke="#777" stroke-width=".3"/>
<rect x="1404.8" y="714.800" width="7.300" height="4.800" rx="1" fill="#ececec" stroke="#8a8a8a" stroke-width=".5"/><rect x="1438.1" y="716.400" width="7.200" height="5.800" rx="1" fill="#ececec" stroke="#8a8a8a" stroke-width=".5"/>
<path d="M1408.3 719.600 v3.500 l14 3" fill="none" stroke="#b4b4b4" stroke-width=".8"/>
<rect x="1468.5" y="720" width="6" height="47" fill="url(#mPd)" stroke="#8a8a8a" stroke-width=".3"/>
<rect x="1461.7" y="710.600" width="17.700" height="10" fill="url(#mM)" stroke="#777" stroke-width=".3"/>
<rect x="1451.0" y="714.800" width="7.300" height="4.800" rx="1" fill="#ececec" stroke="#8a8a8a" stroke-width=".5"/><rect x="1484.2" y="716.400" width="7.200" height="5.800" rx="1" fill="#ececec" stroke="#8a8a8a" stroke-width=".5"/>
<path d="M1454.5 719.600 v3.500 l14 3" fill="none" stroke="#b4b4b4" stroke-width=".8"/>
<rect x="1514.6" y="720" width="6" height="47" fill="url(#mPd)" stroke="#8a8a8a" stroke-width=".3"/>
<rect x="1507.8" y="710.600" width="17.700" height="10" fill="url(#mM)" stroke="#777" stroke-width=".3"/>
<rect x="1497.1" y="714.800" width="7.300" height="4.800" rx="1" fill="#ececec" stroke="#8a8a8a" stroke-width=".5"/><rect x="1530.4" y="716.400" width="7.200" height="5.800" rx="1" fill="#ececec" stroke="#8a8a8a" stroke-width=".5"/>
<path d="M1500.6 719.600 v3.500 l14 3" fill="none" stroke="#b4b4b4" stroke-width=".8"/>
<rect x="1560.8" y="720" width="6" height="47" fill="url(#mPd)" stroke="#8a8a8a" stroke-width=".3"/>
<rect x="1554.0" y="710.600" width="17.700" height="10" fill="url(#mM)" stroke="#777" stroke-width=".3"/>
<rect x="1543.2" y="714.800" width="7.300" height="4.800" rx="1" fill="#ececec" stroke="#8a8a8a" stroke-width=".5"/><rect x="1576.5" y="716.400" width="7.200" height="5.800" rx="1" fill="#ececec" stroke="#8a8a8a" stroke-width=".5"/>
<path d="M1546.8 719.600 v3.500 l14 3" fill="none" stroke="#b4b4b4" stroke-width=".8"/>
<rect x="1343.75" y="772.500" width="18.700" height="73" fill="url(#mM)"/>
<rect x="1499" y="772.500" width="18.700" height="73" fill="url(#mM)"/>
<rect x="1600.500" y="722" width="6" height="123" fill="url(#mPd)" stroke="#777" stroke-width=".4"/><rect x="1622.500" y="722" width="5.500" height="123" fill="url(#mPd)" stroke="#777" stroke-width=".4"/>
<path d="M1616 715 L1650 715 Q1676 716 1677 738" fill="none" stroke="url(#wcv)" stroke-width="4.500"/>
<path d="M1597 719.700 L1648.500 719.700 L1636.500 730.600 L1597 730.600 Z" fill="url(#mHd)" stroke="#666" stroke-width=".4"/>
<path d="M1600.500 708 q3 0 3 3 v9 M1608.500 708 q3 0 3 3 v9" fill="none" stroke="#8a8a8a" stroke-width="1.800"/>
<circle cx="1624.500" cy="710" r="4" fill="url(#pulM)" stroke="#666" stroke-width=".5"/><circle cx="1624.500" cy="716.800" r="4" fill="url(#pulM)" stroke="#666" stroke-width=".5"/><circle cx="1634" cy="717" r="3.800" fill="url(#pulM)" stroke="#666" stroke-width=".5"/>
<path d="M1628 740.500 H1736 Q1740.500 740.500 1740.500 745 V753 Q1740.500 757 1736 757 H1628" fill="none" stroke="#8e8e8e" stroke-width="3.400"/>
<path d="M1628 740.200 H1736 Q1740.800 740.200 1740.800 745" fill="none" stroke="#dcdcdc" stroke-width="2.400"/>
<rect x="1664.700" y="733.700" width="23" height="25.500" fill="url(#mPd)" stroke="#777" stroke-width=".4"/>
<ellipse cx="1664" cy="727" rx="6.800" ry="6.300" fill="url(#pulL)" stroke="#8a8a8a" stroke-width=".6"/><ellipse cx="1687.600" cy="727" rx="6.800" ry="6.300" fill="url(#pulL)" stroke="#8a8a8a" stroke-width=".6"/>
<rect x="1687.600" y="748.800" width="12" height="2.800" fill="#0c2a38"/><path d="M1699 749 q0 -3 4 -4.500 q4 -1 8 -1 h18 q4 0 6 1.500 q2.600 1.500 2.600 4 q0 2.500 -2.600 4 q-2 1.500 -6 1.500 h-18 q-4 0 -8 -1 q-4 -1.500 -4 -4.500z" fill="url(#mVl)" stroke="#999" stroke-width=".4"/>
<rect x="1651.700" y="759" width="49" height="8.600" fill="url(#mHd)" stroke="#777" stroke-width=".3"/>
<rect x="1623" y="767.600" width="117" height="5.600" fill="url(#mHd)" stroke="#666" stroke-width=".3"/>
<rect x="1669" y="773.200" width="13" height="6" fill="url(#mP)"/>
<rect x="1635.500" y="779" width="81.300" height="8" fill="#1a3640"/><rect x="1638" y="779" width="76" height="1.500" fill="#3a5660"/>
<rect x="1644" y="787" width="64" height="5.600" fill="url(#mV)"/>
<rect x="1645.500" y="792.500" width="57.500" height="46" fill="url(#coil)"/>
<rect x="1645.500" y="794.5" width="57.500" height=".9" fill="#fff8dc" opacity=".75"/>
<rect x="1645.500" y="797.5" width="57.500" height=".9" fill="#fff8dc" opacity=".75"/>
<rect x="1645.500" y="800.5" width="57.500" height=".9" fill="#fff8dc" opacity=".75"/>
<rect x="1645.500" y="803.5" width="57.500" height=".9" fill="#fff8dc" opacity=".75"/>
<rect x="1645.500" y="806.5" width="57.500" height=".9" fill="#fff8dc" opacity=".75"/>
<rect x="1645.500" y="809.5" width="57.500" height=".9" fill="#fff8dc" opacity=".75"/>
<rect x="1645.500" y="812.5" width="57.500" height=".9" fill="#fff8dc" opacity=".75"/>
<rect x="1645.500" y="815.5" width="57.500" height=".9" fill="#fff8dc" opacity=".75"/>
<rect x="1645.500" y="818.5" width="57.500" height=".9" fill="#fff8dc" opacity=".75"/>
<rect x="1645.500" y="821.5" width="57.500" height=".9" fill="#fff8dc" opacity=".75"/>
<rect x="1645.500" y="824.5" width="57.500" height=".9" fill="#fff8dc" opacity=".75"/>
<rect x="1645.500" y="827.5" width="57.500" height=".9" fill="#fff8dc" opacity=".75"/>
<rect x="1645.500" y="830.5" width="57.500" height=".9" fill="#fff8dc" opacity=".75"/>
<rect x="1645.500" y="833.5" width="57.500" height=".9" fill="#fff8dc" opacity=".75"/>
<rect x="1645.500" y="836.5" width="57.500" height=".9" fill="#fff8dc" opacity=".75"/>
<path d="M1643 845 L1645 838 L1707 838 L1709 845 Z" fill="url(#mHd)" stroke="#666" stroke-width=".3"/>
</svg>
<div class="tab" style="left:32px;top:94px;width:188px;height:24px;"></div>
<div style="left:-54.0px;top:96.5px;line-height:19px;height:19px;font-size:14.5px;color:#e4eaff;font-weight:700;white-space:nowrap;width:300px;text-align:center;transform:scaleX(0.88);transform-origin:50% 50%;">Burner Pressure</div>
<div style="left:14px;top:98.5px;line-height:17px;height:17px;font-size:13px;color:#e4eaff;font-weight:400;white-space:nowrap;width:200px;text-align:right;">[cmH₂O]</div>
<div class="pbody" style="left:10px;top:118px;width:204px;height:130px;"></div>
<div style="left:68.8px;top:128px;width:1.4px;height:106px;background:#c2c2c2"></div><div style="left:94.8px;top:128px;width:1.4px;height:106px;background:#c2c2c2"></div><div style="left:120.8px;top:128px;width:1.4px;height:106px;background:#c2c2c2"></div><div style="left:146.8px;top:128px;width:1.4px;height:106px;background:#c2c2c2"></div><div style="left:172.8px;top:128px;width:1.4px;height:106px;background:#c2c2c2"></div><div style="left:198.8px;top:128px;width:1.4px;height:106px;background:#c2c2c2"></div>
<div style="left:23px;top:131.0px;line-height:18px;height:18px;font-size:13.5px;color:#0b1b5e;font-weight:700;white-space:nowrap;">MR1</div>
<div class="g" style="left:67px;top:128px;width:131px;height:18px"><i style="width:56.8px;background:linear-gradient(180deg,#f3f33c 0%,#c0bb16 42%,#d4d238 70%,#ecec74 100%)"></i><b style="font-size:21px;line-height:16.5px;transform:scaleX(0.95)">65</b></div>
<div style="left:23px;top:157.0px;line-height:18px;height:18px;font-size:13.5px;color:#0b1b5e;font-weight:700;white-space:nowrap;">MR2</div>
<div class="g" style="left:67px;top:154px;width:131px;height:18px"><i style="width:37.6px;background:linear-gradient(180deg,#f3f33c 0%,#c0bb16 42%,#d4d238 70%,#ecec74 100%)"></i><b style="font-size:21px;line-height:16.5px;transform:scaleX(0.95)">43</b></div>
<div style="left:23px;top:183.0px;line-height:18px;height:18px;font-size:13.5px;color:#0b1b5e;font-weight:700;white-space:nowrap;">MR3</div>
<div class="g" style="left:67px;top:180px;width:131px;height:18px"><i style="width:27.9px;background:linear-gradient(180deg,#f3f33c 0%,#c0bb16 42%,#d4d238 70%,#ecec74 100%)"></i><b style="font-size:21px;line-height:16.5px;transform:scaleX(0.95)">32</b></div>
<div style="left:23px;top:209.0px;line-height:18px;height:18px;font-size:13.5px;color:#0b1b5e;font-weight:700;white-space:nowrap;">H.L</div>
<div class="g" style="left:67px;top:206px;width:131px;height:18px"><i style="width:56.8px;background:linear-gradient(180deg,#f3f33c 0%,#c0bb16 42%,#d4d238 70%,#ecec74 100%)"></i><b style="font-size:21px;line-height:16.5px;transform:scaleX(0.95)">65</b></div>
<div style="left:49.5px;top:232.5px;line-height:13px;height:13px;font-size:10.3px;color:#0b1b5e;font-weight:400;white-space:nowrap;width:40px;text-align:center;">0</div><div style="left:75.5px;top:232.5px;line-height:13px;height:13px;font-size:10.3px;color:#0b1b5e;font-weight:400;white-space:nowrap;width:40px;text-align:center;">30</div><div style="left:101.5px;top:232.5px;line-height:13px;height:13px;font-size:10.3px;color:#0b1b5e;font-weight:400;white-space:nowrap;width:40px;text-align:center;">60</div><div style="left:127.5px;top:232.5px;line-height:13px;height:13px;font-size:10.3px;color:#0b1b5e;font-weight:400;white-space:nowrap;width:40px;text-align:center;">90</div><div style="left:153.5px;top:232.5px;line-height:13px;height:13px;font-size:10.3px;color:#0b1b5e;font-weight:400;white-space:nowrap;width:40px;text-align:center;">120</div><div style="left:179.5px;top:232.5px;line-height:13px;height:13px;font-size:10.3px;color:#0b1b5e;font-weight:400;white-space:nowrap;width:40px;text-align:center;">150</div>
<div class="tab" style="left:252px;top:94px;width:617px;height:24px;"></div>
<div style="left:410.5px;top:96.5px;line-height:19px;height:19px;font-size:14.5px;color:#e4eaff;font-weight:700;white-space:nowrap;width:300px;text-align:center;transform:scaleX(0.88);transform-origin:50% 50%;">Fire Pipe Line</div>
<div class="pbody" style="left:230px;top:118px;width:633px;height:173px;"></div>
<div style="left:246.0px;top:124.5px;line-height:18px;height:18px;font-size:13.5px;color:#0b1b5e;font-weight:700;white-space:nowrap;width:200px;text-align:center;">Pressure [cmH<span style="font-size:70%;position:relative;top:3px">2</span>O]</div>
<div style="left:396.0px;top:124.5px;line-height:18px;height:18px;font-size:13.5px;color:#0b1b5e;font-weight:700;white-space:nowrap;width:200px;text-align:center;">CO [%]</div>
<div style="left:620.0px;top:124.5px;line-height:18px;height:18px;font-size:13.5px;color:#0b1b5e;font-weight:700;white-space:nowrap;width:200px;text-align:center;">Temperature [°C]</div>
<div style="left:284.8px;top:148px;width:1.4px;height:130px;background:#c2c2c2"></div><div style="left:308.9px;top:148px;width:1.4px;height:130px;background:#c2c2c2"></div><div style="left:333.0px;top:148px;width:1.4px;height:130px;background:#c2c2c2"></div><div style="left:357.1px;top:148px;width:1.4px;height:130px;background:#c2c2c2"></div><div style="left:381.2px;top:148px;width:1.4px;height:130px;background:#c2c2c2"></div><div style="left:405.3px;top:148px;width:1.4px;height:130px;background:#c2c2c2"></div>
<div style="left:434.3px;top:148px;width:1.4px;height:130px;background:#c2c2c2"></div><div style="left:458.5px;top:148px;width:1.4px;height:130px;background:#c2c2c2"></div><div style="left:482.7px;top:148px;width:1.4px;height:130px;background:#c2c2c2"></div><div style="left:506.9px;top:148px;width:1.4px;height:130px;background:#c2c2c2"></div><div style="left:531.1px;top:148px;width:1.4px;height:130px;background:#c2c2c2"></div><div style="left:555.3px;top:148px;width:1.4px;height:130px;background:#c2c2c2"></div>
<div style="left:238px;top:147px;width:40px;height:24px;background:#7ac143;color:#0b1b5e;font-size:15px;line-height:24px;text-align:center;font-weight:400;">GN</div>
<div class="g" style="left:283px;top:148px;width:121px;height:18px"><i style="width:19.2px;background:linear-gradient(180deg,#f3f33c 0%,#c0bb16 42%,#d4d238 70%,#ecec74 100%)"></i><b style="font-size:21px;line-height:16.5px;transform:scaleX(0.95)">32</b></div>
<div class="g" style="left:433px;top:148px;width:121px;height:18px"><i style="width:10.0px;background:linear-gradient(180deg,#8ed44e 0%,#74c03c 50%,#b0e684 100%)"></i><b style="font-size:21px;line-height:16.5px;transform:scaleX(0.95)">0.71</b></div>
<div style="left:583px;top:147px;width:69px;height:24px;background:#000;color:#adff2f;font-size:20px;line-height:26px;text-align:center;font-weight:400;-webkit-text-stroke:.35px #adff2f;">52</div>
<div style="left:653px;top:147px;width:69px;height:24px;background:#000;color:#adff2f;font-size:20px;line-height:26px;text-align:center;font-weight:400;-webkit-text-stroke:.35px #adff2f;">46</div>
<div style="left:723px;top:147px;width:69px;height:24px;background:#000;color:#adff2f;font-size:20px;line-height:26px;text-align:center;font-weight:400;-webkit-text-stroke:.35px #adff2f;">45</div>
<div style="left:793px;top:147px;width:68px;height:24px;background:#000;color:#adff2f;font-size:20px;line-height:26px;text-align:center;font-weight:400;-webkit-text-stroke:.35px #adff2f;">46</div>
<div style="left:238px;top:173px;width:40px;height:24px;background:#ffb300;color:#0b1b5e;font-size:15px;line-height:24px;text-align:center;font-weight:400;">OR</div>
<div class="g" style="left:283px;top:174px;width:121px;height:18px"><i style="width:25.8px;background:linear-gradient(180deg,#f3f33c 0%,#c0bb16 42%,#d4d238 70%,#ecec74 100%)"></i><b style="font-size:21px;line-height:16.5px;transform:scaleX(0.95)">43</b></div>
<div class="g" style="left:433px;top:174px;width:121px;height:18px"><i style="width:9.4px;background:linear-gradient(180deg,#f4a828 0%,#e89a18 50%,#f4cc80 100%)"></i><b style="font-size:21px;line-height:16.5px;transform:scaleX(0.95)">0.66</b></div>
<div style="left:583px;top:173px;width:69px;height:24px;background:#000;color:#adff2f;font-size:20px;line-height:26px;text-align:center;font-weight:400;-webkit-text-stroke:.35px #adff2f;">54</div>
<div style="left:653px;top:173px;width:69px;height:24px;background:#000;color:#adff2f;font-size:20px;line-height:26px;text-align:center;font-weight:400;-webkit-text-stroke:.35px #adff2f;">50</div>
<div style="left:723px;top:173px;width:69px;height:24px;background:#000;color:#adff2f;font-size:20px;line-height:26px;text-align:center;font-weight:400;-webkit-text-stroke:.35px #adff2f;">48</div>
<div style="left:793px;top:173px;width:68px;height:24px;background:#000;color:#adff2f;font-size:20px;line-height:26px;text-align:center;font-weight:400;-webkit-text-stroke:.35px #adff2f;">51</div>
<div style="left:238px;top:199px;width:40px;height:24px;background:#ff5722;color:#0b1b5e;font-size:15px;line-height:24px;text-align:center;font-weight:400;">RD</div>
<div class="g" style="left:283px;top:200px;width:121px;height:18px"><i style="width:39.0px;background:linear-gradient(180deg,#f3f33c 0%,#c0bb16 42%,#d4d238 70%,#ecec74 100%)"></i><b style="font-size:21px;line-height:16.5px;transform:scaleX(0.95)">65</b></div>
<div class="g" style="left:433px;top:200px;width:121px;height:18px"><i style="width:8.9px;background:linear-gradient(180deg,#f06038 0%,#ee6a48 50%,#f8b8a4 100%)"></i><b style="font-size:21px;line-height:16.5px;transform:scaleX(0.95)">0.62</b></div>
<div style="left:583px;top:199px;width:69px;height:24px;background:#000;color:#adff2f;font-size:20px;line-height:26px;text-align:center;font-weight:400;-webkit-text-stroke:.35px #adff2f;">54</div>
<div style="left:653px;top:199px;width:69px;height:24px;background:#000;color:#adff2f;font-size:20px;line-height:26px;text-align:center;font-weight:400;-webkit-text-stroke:.35px #adff2f;">52</div>
<div style="left:723px;top:199px;width:69px;height:24px;background:#000;color:#adff2f;font-size:20px;line-height:26px;text-align:center;font-weight:400;-webkit-text-stroke:.35px #adff2f;">52</div>
<div style="left:793px;top:199px;width:68px;height:24px;background:#000;color:#adff2f;font-size:20px;line-height:26px;text-align:center;font-weight:400;-webkit-text-stroke:.35px #adff2f;">53</div>
<div style="left:238px;top:225px;width:40px;height:24px;background:#ffdb5c;color:#0b1b5e;font-size:15px;line-height:24px;text-align:center;font-weight:400;">YL</div>
<div class="g" style="left:283px;top:226px;width:121px;height:18px"><i style="width:25.8px;background:linear-gradient(180deg,#f3f33c 0%,#c0bb16 42%,#d4d238 70%,#ecec74 100%)"></i><b style="font-size:21px;line-height:16.5px;transform:scaleX(0.95)">43</b></div>
<div class="g" style="left:433px;top:226px;width:121px;height:18px"><i style="width:9.7px;background:linear-gradient(180deg,#e8c020 0%,#dcb414 50%,#f0dc70 100%)"></i><b style="font-size:21px;line-height:16.5px;transform:scaleX(0.95)">0.68</b></div>
<div style="left:583px;top:225px;width:69px;height:24px;background:#000;color:#adff2f;font-size:20px;line-height:26px;text-align:center;font-weight:400;-webkit-text-stroke:.35px #adff2f;">46</div>
<div style="left:653px;top:225px;width:69px;height:24px;background:#000;color:#adff2f;font-size:20px;line-height:26px;text-align:center;font-weight:400;-webkit-text-stroke:.35px #adff2f;">45</div>
<div style="left:723px;top:225px;width:69px;height:24px;background:#000;color:#adff2f;font-size:20px;line-height:26px;text-align:center;font-weight:400;-webkit-text-stroke:.35px #adff2f;">45</div>
<div style="left:793px;top:225px;width:68px;height:24px;background:#000;color:#adff2f;font-size:20px;line-height:26px;text-align:center;font-weight:400;-webkit-text-stroke:.35px #adff2f;">49</div>
<div style="left:238px;top:251px;width:40px;height:24px;background:#00bcd4;color:#0b1b5e;font-size:15px;line-height:24px;text-align:center;font-weight:400;">BL</div>
<div class="g" style="left:283px;top:252px;width:121px;height:18px"><i style="width:39.0px;background:linear-gradient(180deg,#f3f33c 0%,#c0bb16 42%,#d4d238 70%,#ecec74 100%)"></i><b style="font-size:21px;line-height:16.5px;transform:scaleX(0.95)">65</b></div>
<div class="g" style="left:433px;top:252px;width:121px;height:18px"><i style="width:9.7px;background:linear-gradient(180deg,#20c0d8 0%,#28c4d8 50%,#8ce0ea 100%)"></i><b style="font-size:21px;line-height:16.5px;transform:scaleX(0.95)">0.68</b></div>
<div style="left:583px;top:251px;width:69px;height:24px;background:#000;color:#adff2f;font-size:20px;line-height:26px;text-align:center;font-weight:400;-webkit-text-stroke:.35px #adff2f;">49</div>
<div style="left:653px;top:251px;width:69px;height:24px;background:#000;color:#adff2f;font-size:20px;line-height:26px;text-align:center;font-weight:400;-webkit-text-stroke:.35px #adff2f;">49</div>
<div style="left:723px;top:251px;width:69px;height:24px;background:#000;color:#adff2f;font-size:20px;line-height:26px;text-align:center;font-weight:400;-webkit-text-stroke:.35px #adff2f;">46</div>
<div style="left:265.5px;top:278.0px;line-height:13px;height:13px;font-size:10.3px;color:#0b1b5e;font-weight:400;white-space:nowrap;width:40px;text-align:center;">0</div><div style="left:289.6px;top:278.0px;line-height:13px;height:13px;font-size:10.3px;color:#0b1b5e;font-weight:400;white-space:nowrap;width:40px;text-align:center;">40</div><div style="left:313.7px;top:278.0px;line-height:13px;height:13px;font-size:10.3px;color:#0b1b5e;font-weight:400;white-space:nowrap;width:40px;text-align:center;">80</div><div style="left:337.8px;top:278.0px;line-height:13px;height:13px;font-size:10.3px;color:#0b1b5e;font-weight:400;white-space:nowrap;width:40px;text-align:center;">120</div><div style="left:361.9px;top:278.0px;line-height:13px;height:13px;font-size:10.3px;color:#0b1b5e;font-weight:400;white-space:nowrap;width:40px;text-align:center;">160</div><div style="left:386.0px;top:278.0px;line-height:13px;height:13px;font-size:10.3px;color:#0b1b5e;font-weight:400;white-space:nowrap;width:40px;text-align:center;">200</div>
<div style="left:415.0px;top:278.0px;line-height:13px;height:13px;font-size:10.3px;color:#0b1b5e;font-weight:400;white-space:nowrap;width:40px;text-align:center;">0</div><div style="left:439.2px;top:278.0px;line-height:13px;height:13px;font-size:10.3px;color:#0b1b5e;font-weight:400;white-space:nowrap;width:40px;text-align:center;">2</div><div style="left:463.4px;top:278.0px;line-height:13px;height:13px;font-size:10.3px;color:#0b1b5e;font-weight:400;white-space:nowrap;width:40px;text-align:center;">4</div><div style="left:487.6px;top:278.0px;line-height:13px;height:13px;font-size:10.3px;color:#0b1b5e;font-weight:400;white-space:nowrap;width:40px;text-align:center;">6</div><div style="left:511.79999999999995px;top:278.0px;line-height:13px;height:13px;font-size:10.3px;color:#0b1b5e;font-weight:400;white-space:nowrap;width:40px;text-align:center;">8</div><div style="left:536.0px;top:278.0px;line-height:13px;height:13px;font-size:10.3px;color:#0b1b5e;font-weight:400;white-space:nowrap;width:40px;text-align:center;">10</div>
<div class="tab" style="left:32px;top:264px;width:153px;height:22px;"></div>
<div style="left:-63.0px;top:265.5px;line-height:19px;height:19px;font-size:14.5px;color:#e4eaff;font-weight:700;white-space:nowrap;width:300px;text-align:center;transform:scaleX(0.88);transform-origin:50% 50%;">LPG Fuel</div>
<div style="left:-21px;top:267.5px;line-height:17px;height:17px;font-size:13px;color:#e4eaff;font-weight:400;white-space:nowrap;width:200px;text-align:right;">[Nm<span style="font-size:70%;position:relative;top:-5px">3</span>]</div>
<div class="pbody" style="left:10px;top:286px;width:169px;height:72px;"></div>
<div style="left:21px;top:298.5px;line-height:19px;height:19px;font-size:14.5px;color:#0b1b5e;font-weight:700;white-space:nowrap;">Melter</div>
<div style="left:21px;top:333.0px;line-height:19px;height:19px;font-size:14.5px;color:#0b1b5e;font-weight:700;white-space:nowrap;">Holder</div>
<div style="left:76px;top:292px;width:103px;height:32px;background:#000;color:#adff2f;font-size:20px;line-height:34px;text-align:center;font-weight:400;-webkit-text-stroke:.35px #adff2f;">886</div>
<div style="left:76px;top:327px;width:103px;height:31px;background:#000;color:#adff2f;font-size:20px;line-height:33px;text-align:center;font-weight:400;-webkit-text-stroke:.35px #adff2f;">129</div>
<div class="tab" style="left:32px;top:374px;width:150px;height:22px;"></div>
<div style="left:-58.0px;top:375.5px;line-height:19px;height:19px;font-size:14.5px;color:#e4eaff;font-weight:700;white-space:nowrap;width:300px;text-align:center;transform:scaleX(0.88);transform-origin:50% 50%;">SCU</div>
<div style="left:-24px;top:377.5px;line-height:17px;height:17px;font-size:13px;color:#e4eaff;font-weight:400;white-space:nowrap;width:200px;text-align:right;">[%]</div>
<div class="pbody" style="left:10px;top:396px;width:166px;height:72px;"></div>
<div style="left:76px;top:402px;width:100px;height:32px;background:#000;color:#adff2f;font-size:20px;line-height:34px;text-align:center;font-weight:400;-webkit-text-stroke:.35px #adff2f;">0.62</div>
<div style="left:76px;top:437px;width:100px;height:31px;background:#000;color:#adff2f;font-size:20px;line-height:33px;text-align:center;font-weight:400;-webkit-text-stroke:.35px #adff2f;">0.48</div>
<div style="left:38px;top:410.5px;line-height:17px;height:17px;font-size:13px;color:#0b1b5e;font-weight:700;white-space:nowrap;transform:scaleX(0.9);transform-origin:0 50%;">SCU1</div>
<div style="left:38px;top:445.5px;line-height:17px;height:17px;font-size:13px;color:#0b1b5e;font-weight:700;white-space:nowrap;transform:scaleX(0.9);transform-origin:0 50%;">SCU2</div>
<div style="left:17.500px;top:410.500px;width:13px;height:13px;border:1.500px solid #1e90ff;border-radius:50%;background:radial-gradient(circle,#1e90ff 0,#1e90ff 3.600px,#fff 4.400px)"></div>
<div style="left:18px;top:445px;width:13px;height:13px;border:1.200px solid #555;border-radius:50%;background:#fff"></div>
<div class="tab" style="left:902px;top:94px;width:208px;height:22px;"></div>
<div style="left:841.0px;top:95.5px;line-height:19px;height:19px;font-size:14.5px;color:#e4eaff;font-weight:700;white-space:nowrap;width:300px;text-align:center;transform:scaleX(0.88);transform-origin:50% 50%;">Temperatures</div>
<div style="left:904px;top:97.5px;line-height:17px;height:17px;font-size:13px;color:#e4eaff;font-weight:400;white-space:nowrap;width:200px;text-align:right;">[°C]</div>
<div class="pbody" style="left:880px;top:116px;width:224px;height:132px;"></div>
<div style="left:979.8px;top:125px;width:1.4px;height:105px;background:#c2c2c2"></div><div style="left:1002.7px;top:125px;width:1.4px;height:105px;background:#c2c2c2"></div><div style="left:1025.6px;top:125px;width:1.4px;height:105px;background:#c2c2c2"></div><div style="left:1048.5px;top:125px;width:1.4px;height:105px;background:#c2c2c2"></div><div style="left:1071.4px;top:125px;width:1.4px;height:105px;background:#c2c2c2"></div><div style="left:1094.3px;top:125px;width:1.4px;height:105px;background:#c2c2c2"></div>
<div style="left:893px;top:126.5px;line-height:18px;height:18px;font-size:13.5px;color:#0b1b5e;font-weight:700;white-space:nowrap;">Tundish #1</div>
<div class="g" style="left:978px;top:124px;width:115px;height:18px"><i style="width:87.0px;background:linear-gradient(90deg,#e2482a 0px,#ee8a3c 45px,#f4c858 100px)"></i><b style="font-size:21px;line-height:16.5px;transform:scaleX(0.95)">1130</b></div>
<div style="left:893px;top:152.5px;line-height:18px;height:18px;font-size:13.5px;color:#0b1b5e;font-weight:700;white-space:nowrap;">Tundish #2</div>
<div class="g" style="left:978px;top:150px;width:115px;height:18px"><i style="width:3.0px;background:linear-gradient(90deg,#e2482a 0px,#ee8a3c 45px,#f4c858 100px)"></i><b style="font-size:21px;line-height:16.5px;transform:scaleX(0.95)">30</b></div>
<div style="left:893px;top:178.5px;line-height:18px;height:18px;font-size:13.5px;color:#0b1b5e;font-weight:700;white-space:nowrap;">T°C H<span style="font-size:70%;position:relative;top:3px">2</span>O</div>
<div class="g" style="left:978px;top:176px;width:115px;height:18px"><i style="width:3.0px;background:linear-gradient(90deg,#e2482a 0px,#ee8a3c 45px,#f4c858 100px)"></i><b style="font-size:21px;line-height:16.5px;transform:scaleX(0.95)">35</b></div>
<div style="left:893px;top:204.5px;line-height:18px;height:18px;font-size:13.5px;color:#0b1b5e;font-weight:700;white-space:nowrap;">Cast Bar</div>
<div class="g" style="left:978px;top:202px;width:115px;height:18px"><i style="width:64.4px;background:linear-gradient(90deg,#e2482a 0px,#ee8a3c 45px,#f4c858 100px)"></i><b style="font-size:21px;line-height:16.5px;transform:scaleX(0.95)">836</b></div>
<div style="left:960.5px;top:229.0px;line-height:13px;height:13px;font-size:10px;color:#0b1b5e;font-weight:400;white-space:nowrap;width:40px;text-align:center;">0</div><div style="left:983.4px;top:229.0px;line-height:13px;height:13px;font-size:10px;color:#0b1b5e;font-weight:400;white-space:nowrap;width:40px;text-align:center;">300</div><div style="left:1006.3px;top:229.0px;line-height:13px;height:13px;font-size:10px;color:#0b1b5e;font-weight:400;white-space:nowrap;width:40px;text-align:center;">600</div><div style="left:1029.2px;top:229.0px;line-height:13px;height:13px;font-size:10px;color:#0b1b5e;font-weight:400;white-space:nowrap;width:40px;text-align:center;">900</div><div style="left:1052.1px;top:229.0px;line-height:13px;height:13px;font-size:10px;color:#0b1b5e;font-weight:400;white-space:nowrap;width:40px;text-align:center;transform:scaleX(0.93);transform-origin:50% 50%;">1200</div><div style="left:1075.0px;top:229.0px;line-height:13px;height:13px;font-size:10px;color:#0b1b5e;font-weight:400;white-space:nowrap;width:40px;text-align:center;transform:scaleX(0.93);transform-origin:50% 50%;">1500</div>
<div class="tab" style="left:1142px;top:94px;width:298px;height:22px;"></div>
<div style="left:1141.0px;top:95.5px;line-height:19px;height:19px;font-size:14.5px;color:#e4eaff;font-weight:700;white-space:nowrap;width:300px;text-align:center;transform:scaleX(0.88);transform-origin:50% 50%;">Casting Cooling Water</div>
<div class="pbody" style="left:1120px;top:116px;width:314px;height:218px;"></div>
<div style="left:1127.0px;top:122.0px;line-height:18px;height:18px;font-size:13.5px;color:#0b1b5e;font-weight:700;white-space:nowrap;width:200px;text-align:center;">Pressure [Kg/cm<span style="font-size:70%;position:relative;top:-5px">2</span>]</div>
<div style="left:1269.0px;top:122.0px;line-height:18px;height:18px;font-size:14px;color:#0b1b5e;font-weight:700;white-space:nowrap;width:200px;text-align:center;">Flow [L/min]</div>
<div style="left:1165.8px;top:144px;width:1.4px;height:156px;background:#c2c2c2"></div><div style="left:1189.3px;top:144px;width:1.4px;height:156px;background:#c2c2c2"></div><div style="left:1212.8px;top:144px;width:1.4px;height:156px;background:#c2c2c2"></div><div style="left:1236.3px;top:144px;width:1.4px;height:156px;background:#c2c2c2"></div><div style="left:1259.8px;top:144px;width:1.4px;height:156px;background:#c2c2c2"></div><div style="left:1283.3px;top:144px;width:1.4px;height:156px;background:#c2c2c2"></div>
<div style="left:1307.8px;top:144px;width:1.4px;height:156px;background:#c2c2c2"></div><div style="left:1331.1px;top:144px;width:1.4px;height:156px;background:#c2c2c2"></div><div style="left:1354.4px;top:144px;width:1.4px;height:156px;background:#c2c2c2"></div><div style="left:1377.7px;top:144px;width:1.4px;height:156px;background:#c2c2c2"></div><div style="left:1401.0px;top:144px;width:1.4px;height:156px;background:#c2c2c2"></div><div style="left:1424.3px;top:144px;width:1.4px;height:156px;background:#c2c2c2"></div>
<div style="left:1128px;top:145.5px;line-height:17px;height:17px;font-size:13px;color:#0b1b5e;font-weight:700;white-space:nowrap;">W1</div>
<div class="g" style="left:1164px;top:143px;width:118px;height:17px"><i style="width:15.2px;background:linear-gradient(180deg,#f3f33c 0%,#c0bb16 42%,#d4d238 70%,#ecec74 100%)"></i><b style="font-size:21px;line-height:15.5px;transform:scaleX(0.95)">1.3</b></div>
<div class="g" style="left:1306px;top:143px;width:118px;height:17px"><i style="width:38.8px;background:linear-gradient(180deg,#52e6de 0%,#14c4c4 45%,#22cccc 70%,#5ae0da 100%)"></i><b style="font-size:21px;line-height:15.5px;transform:scaleX(0.95)">137.1</b></div>
<div style="left:1128px;top:169.5px;line-height:17px;height:17px;font-size:13px;color:#0b1b5e;font-weight:700;white-space:nowrap;">W2</div>
<div class="g" style="left:1164px;top:167px;width:118px;height:17px"><i style="width:39.8px;background:linear-gradient(180deg,#f3f33c 0%,#c0bb16 42%,#d4d238 70%,#ecec74 100%)"></i><b style="font-size:21px;line-height:15.5px;transform:scaleX(0.95)">3.4</b></div>
<div class="g" style="left:1306px;top:167px;width:118px;height:17px"><i style="width:69.5px;background:linear-gradient(180deg,#52e6de 0%,#14c4c4 45%,#22cccc 70%,#5ae0da 100%)"></i><b style="font-size:21px;line-height:15.5px;transform:scaleX(0.95)">245.4</b></div>
<div style="left:1128px;top:193.5px;line-height:17px;height:17px;font-size:13px;color:#0b1b5e;font-weight:700;white-space:nowrap;">W3</div>
<div class="g" style="left:1164px;top:191px;width:118px;height:17px"><i style="width:44.5px;background:linear-gradient(180deg,#f3f33c 0%,#c0bb16 42%,#d4d238 70%,#ecec74 100%)"></i><b style="font-size:21px;line-height:15.5px;transform:scaleX(0.95)">3.8</b></div>
<div class="g" style="left:1306px;top:191px;width:118px;height:17px"><i style="width:84.1px;background:linear-gradient(180deg,#52e6de 0%,#14c4c4 45%,#22cccc 70%,#5ae0da 100%)"></i><b style="font-size:21px;line-height:15.5px;transform:scaleX(0.95)">296.8</b></div>
<div style="left:1128px;top:217.5px;line-height:17px;height:17px;font-size:13px;color:#0b1b5e;font-weight:700;white-space:nowrap;">B1</div>
<div class="g" style="left:1164px;top:215px;width:118px;height:17px"><i style="width:16.4px;background:linear-gradient(180deg,#f3f33c 0%,#c0bb16 42%,#d4d238 70%,#ecec74 100%)"></i><b style="font-size:21px;line-height:15.5px;transform:scaleX(0.95)">1.4</b></div>
<div class="g" style="left:1306px;top:215px;width:118px;height:17px"><i style="width:59.1px;background:linear-gradient(180deg,#52e6de 0%,#14c4c4 45%,#22cccc 70%,#5ae0da 100%)"></i><b style="font-size:21px;line-height:15.5px;transform:scaleX(0.95)">208.6</b></div>
<div style="left:1128px;top:241.5px;line-height:17px;height:17px;font-size:13px;color:#0b1b5e;font-weight:700;white-space:nowrap;">B2</div>
<div class="g" style="left:1164px;top:239px;width:118px;height:17px"><i style="width:18.7px;background:linear-gradient(180deg,#f3f33c 0%,#c0bb16 42%,#d4d238 70%,#ecec74 100%)"></i><b style="font-size:21px;line-height:15.5px;transform:scaleX(0.95)">1.6</b></div>
<div class="g" style="left:1306px;top:239px;width:118px;height:17px"><i style="width:71.9px;background:linear-gradient(180deg,#52e6de 0%,#14c4c4 45%,#22cccc 70%,#5ae0da 100%)"></i><b style="font-size:21px;line-height:15.5px;transform:scaleX(0.95)">253.8</b></div>
<div style="left:1128px;top:265.5px;line-height:17px;height:17px;font-size:13px;color:#0b1b5e;font-weight:700;white-space:nowrap;">B3</div>
<div class="g" style="left:1164px;top:263px;width:118px;height:17px"><i style="width:36.3px;background:linear-gradient(180deg,#f3f33c 0%,#c0bb16 42%,#d4d238 70%,#ecec74 100%)"></i><b style="font-size:21px;line-height:15.5px;transform:scaleX(0.95)">3.1</b></div>
<div class="g" style="left:1306px;top:263px;width:118px;height:17px"><i style="width:77.1px;background:linear-gradient(180deg,#52e6de 0%,#14c4c4 45%,#22cccc 70%,#5ae0da 100%)"></i><b style="font-size:21px;line-height:15.5px;transform:scaleX(0.95)">272.2</b></div>
<div style="left:1128px;top:289.5px;line-height:17px;height:17px;font-size:13px;color:#0b1b5e;font-weight:700;white-space:nowrap;">B4</div>
<div class="g" style="left:1164px;top:287px;width:118px;height:17px"><i style="width:16.4px;background:linear-gradient(180deg,#f3f33c 0%,#c0bb16 42%,#d4d238 70%,#ecec74 100%)"></i><b style="font-size:21px;line-height:15.5px;transform:scaleX(0.95)">1.4</b></div>
<div class="g" style="left:1306px;top:287px;width:118px;height:17px"><i style="width:31.7px;background:linear-gradient(180deg,#52e6de 0%,#14c4c4 45%,#22cccc 70%,#5ae0da 100%)"></i><b style="font-size:21px;line-height:15.5px;transform:scaleX(0.95)">112.0</b></div>
<div class="tab" style="left:1472px;top:94px;width:438px;height:22px;"></div>
<div style="left:1541.0px;top:95.5px;line-height:19px;height:19px;font-size:14.5px;color:#e4eaff;font-weight:700;white-space:nowrap;width:300px;text-align:center;transform:scaleX(0.88);transform-origin:50% 50%;">Drive Information</div>
<div class="pbody" style="left:1450px;top:116px;width:454px;height:258px;"></div>
<div style="left:1561.0px;top:121.5px;line-height:18px;height:18px;font-size:14px;color:#0b1b5e;font-weight:700;white-space:nowrap;width:200px;text-align:center;letter-spacing:.2px;">Rol RPM / Mot RPM</div>
<div style="left:1735.5px;top:121.5px;line-height:18px;height:18px;font-size:14px;color:#0b1b5e;font-weight:700;white-space:nowrap;width:200px;text-align:center;letter-spacing:.2px;">Amature AMP</div>
<div style="left:1561.8px;top:144px;width:1.4px;height:216px;background:#c2c2c2"></div><div style="left:1585.1px;top:144px;width:1.4px;height:216px;background:#c2c2c2"></div><div style="left:1608.4px;top:144px;width:1.4px;height:216px;background:#c2c2c2"></div><div style="left:1631.7px;top:144px;width:1.4px;height:216px;background:#c2c2c2"></div><div style="left:1655.0px;top:144px;width:1.4px;height:216px;background:#c2c2c2"></div><div style="left:1678.3px;top:144px;width:1.4px;height:216px;background:#c2c2c2"></div>
<div style="left:1773.3px;top:144px;width:1.4px;height:216px;background:#c2c2c2"></div><div style="left:1796.5px;top:144px;width:1.4px;height:216px;background:#c2c2c2"></div><div style="left:1819.7px;top:144px;width:1.4px;height:216px;background:#c2c2c2"></div><div style="left:1842.9px;top:144px;width:1.4px;height:216px;background:#c2c2c2"></div><div style="left:1866.1px;top:144px;width:1.4px;height:216px;background:#c2c2c2"></div><div style="left:1889.3px;top:144px;width:1.4px;height:216px;background:#c2c2c2"></div>
<div style="left:1463px;top:145.5px;line-height:17px;height:17px;font-size:13px;color:#0b1b5e;font-weight:700;white-space:nowrap;">CAST WHEEL</div>
<div class="g" style="left:1560px;top:143px;width:117px;height:17px"><b style="font-size:21px;line-height:15.5px;transform:scaleX(0.95)">1.387</b></div>
<div style="left:1696px;top:142px;width:70px;height:23px;background:#000;color:#adff2f;font-size:19.5px;line-height:26.0px;text-align:center;font-weight:400;-webkit-text-stroke:.35px #adff2f;">1,074</div>
<div class="g" style="left:1771px;top:143px;width:117px;height:17px"><i style="width:0.6px;background:linear-gradient(180deg,#48c4ff 0%,#12a4f4 50%,#3cb8fc 100%)"></i><b style="font-size:21px;line-height:15.5px;transform:scaleX(0.95)">2.5</b></div>
<div style="left:1463px;top:169.5px;line-height:17px;height:17px;font-size:13px;color:#0b1b5e;font-weight:700;white-space:nowrap;letter-spacing:.4px;">EX. P/R</div>
<div class="g" style="left:1560px;top:167px;width:117px;height:17px"><i style="width:1.5px;background:linear-gradient(180deg,#9ad85a 0%,#6ab830 50%,#a6e070 100%)"></i><b style="font-size:21px;line-height:15.5px;transform:scaleX(0.95)">13.119</b></div>
<div style="left:1696px;top:166px;width:70px;height:23px;background:#000;color:#adff2f;font-size:19.5px;line-height:26.0px;text-align:center;font-weight:400;-webkit-text-stroke:.35px #adff2f;">1,181</div>
<div class="g" style="left:1771px;top:167px;width:117px;height:17px"><b style="font-size:21px;line-height:15.5px;transform:scaleX(0.95)">0.8</b></div>
<div style="left:1463px;top:193.5px;line-height:17px;height:17px;font-size:13px;color:#0b1b5e;font-weight:700;white-space:nowrap;">CROP. SHEAR</div>
<div class="g" style="left:1560px;top:191px;width:117px;height:17px"><b style="font-size:21px;line-height:15.5px;transform:scaleX(0.95)">0.000</b></div>
<div style="left:1696px;top:190px;width:70px;height:23px;background:#000;color:#adff2f;font-size:19.5px;line-height:26.0px;text-align:center;font-weight:400;-webkit-text-stroke:.35px #adff2f;">0</div>
<div class="g" style="left:1771px;top:191px;width:117px;height:17px"><b style="font-size:21px;line-height:15.5px;transform:scaleX(0.95)">0.0</b></div>
<div style="left:1463px;top:217.5px;line-height:17px;height:17px;font-size:13px;color:#0b1b5e;font-weight:700;white-space:nowrap;letter-spacing:.9px;">R/M 1H</div>
<div class="g" style="left:1560px;top:215px;width:117px;height:17px"><i style="width:1.5px;background:linear-gradient(180deg,#9ad85a 0%,#6ab830 50%,#a6e070 100%)"></i><b style="font-size:21px;line-height:15.5px;transform:scaleX(0.95)">16.000</b></div>
<div style="left:1696px;top:214px;width:70px;height:23px;background:#000;color:#adff2f;font-size:19.5px;line-height:26.0px;text-align:center;font-weight:400;-webkit-text-stroke:.35px #adff2f;">791</div>
<div class="g" style="left:1771px;top:215px;width:117px;height:17px"><i style="width:13.5px;background:linear-gradient(180deg,#48c4ff 0%,#12a4f4 50%,#3cb8fc 100%)"></i><b style="font-size:21px;line-height:15.5px;transform:scaleX(0.95)">57.5</b></div>
<div style="left:1463px;top:241.5px;line-height:17px;height:17px;font-size:13px;color:#0b1b5e;font-weight:700;white-space:nowrap;letter-spacing:.9px;">R/M 2H</div>
<div class="g" style="left:1560px;top:239px;width:117px;height:17px"><i style="width:1.5px;background:linear-gradient(180deg,#9ad85a 0%,#6ab830 50%,#a6e070 100%)"></i><b style="font-size:21px;line-height:15.5px;transform:scaleX(0.95)">27.000</b></div>
<div style="left:1696px;top:238px;width:70px;height:23px;background:#000;color:#adff2f;font-size:19.5px;line-height:26.0px;text-align:center;font-weight:400;-webkit-text-stroke:.35px #adff2f;">806</div>
<div class="g" style="left:1771px;top:239px;width:117px;height:17px"><i style="width:15.0px;background:linear-gradient(180deg,#48c4ff 0%,#12a4f4 50%,#3cb8fc 100%)"></i><b style="font-size:21px;line-height:15.5px;transform:scaleX(0.95)">64.2</b></div>
<div style="left:1463px;top:265.5px;line-height:17px;height:17px;font-size:13px;color:#0b1b5e;font-weight:700;white-space:nowrap;letter-spacing:.9px;">F/M 1,3,5,7H</div>
<div style="left:1696px;top:262px;width:70px;height:23px;background:#000;color:#adff2f;font-size:19.5px;line-height:26.0px;text-align:center;font-weight:400;-webkit-text-stroke:.35px #adff2f;">949</div>
<div class="g" style="left:1771px;top:263px;width:117px;height:17px"><i style="width:111.5px;background:linear-gradient(180deg,#48c4ff 0%,#12a4f4 50%,#3cb8fc 100%)"></i><b style="font-size:21px;line-height:15.5px;transform:scaleX(0.95)">476.7</b></div>
<div style="left:1463px;top:289.5px;line-height:17px;height:17px;font-size:13px;color:#0b1b5e;font-weight:700;white-space:nowrap;letter-spacing:.9px;">F/M 2,4,6,8H</div>
<div style="left:1696px;top:286px;width:70px;height:23px;background:#000;color:#adff2f;font-size:19.5px;line-height:26.0px;text-align:center;font-weight:400;-webkit-text-stroke:.35px #adff2f;">948</div>
<div class="g" style="left:1771px;top:287px;width:117px;height:17px"><i style="width:75.7px;background:linear-gradient(180deg,#48c4ff 0%,#12a4f4 50%,#3cb8fc 100%)"></i><b style="font-size:21px;line-height:15.5px;transform:scaleX(0.95)">323.6</b></div>
<div style="left:1463px;top:313.5px;line-height:17px;height:17px;font-size:13px;color:#0b1b5e;font-weight:700;white-space:nowrap;letter-spacing:.9px;">S/M 1H</div>
<div style="left:1696px;top:310px;width:70px;height:23px;background:#000;color:#adff2f;font-size:19.5px;line-height:26.0px;text-align:center;font-weight:400;-webkit-text-stroke:.35px #adff2f;">916</div>
<div class="g" style="left:1771px;top:311px;width:117px;height:17px"><i style="width:3.8px;background:linear-gradient(180deg,#48c4ff 0%,#12a4f4 50%,#3cb8fc 100%)"></i><b style="font-size:21px;line-height:15.5px;transform:scaleX(0.95)">16.3</b></div>
<div style="left:1463px;top:337.5px;line-height:17px;height:17px;font-size:13px;color:#0b1b5e;font-weight:700;white-space:nowrap;letter-spacing:.9px;">S/M 2H</div>
<div style="left:1696px;top:334px;width:70px;height:23px;background:#000;color:#adff2f;font-size:19.5px;line-height:26.0px;text-align:center;font-weight:400;-webkit-text-stroke:.35px #adff2f;">883</div>
<div class="g" style="left:1771px;top:335px;width:117px;height:17px"><b style="font-size:21px;line-height:15.5px;transform:scaleX(0.95)">-2.7</b></div>
<div style="left:1754.0px;top:360.0px;line-height:13px;height:13px;font-size:10.3px;color:#0b1b5e;font-weight:400;white-space:nowrap;width:40px;text-align:center;">0</div><div style="left:1777.2px;top:360.0px;line-height:13px;height:13px;font-size:10.3px;color:#0b1b5e;font-weight:400;white-space:nowrap;width:40px;text-align:center;">100</div><div style="left:1800.4px;top:360.0px;line-height:13px;height:13px;font-size:10.3px;color:#0b1b5e;font-weight:400;white-space:nowrap;width:40px;text-align:center;">200</div><div style="left:1823.6px;top:360.0px;line-height:13px;height:13px;font-size:10.3px;color:#0b1b5e;font-weight:400;white-space:nowrap;width:40px;text-align:center;">300</div><div style="left:1846.8px;top:360.0px;line-height:13px;height:13px;font-size:10.3px;color:#0b1b5e;font-weight:400;white-space:nowrap;width:40px;text-align:center;">400</div><div style="left:1870.0px;top:360.0px;line-height:13px;height:13px;font-size:10.3px;color:#0b1b5e;font-weight:400;white-space:nowrap;width:40px;text-align:center;">500</div>
<div style="left:1683px;top:359.5px;line-height:14px;height:14px;font-size:11px;color:#0b1b5e;font-weight:400;white-space:nowrap;">00</div>
<div class="tab" style="left:1262px;top:384px;width:428px;height:23px;"></div>
<div style="left:1326.0px;top:386.0px;line-height:19px;height:19px;font-size:14.5px;color:#e4eaff;font-weight:700;white-space:nowrap;width:300px;text-align:center;transform:scaleX(0.88);transform-origin:50% 50%;">IPA NAPS</div>
<div class="pbody" style="left:1240px;top:407px;width:444px;height:280px;"></div>
<div style="left:1248px;top:651.0px;line-height:18px;height:18px;font-size:13.5px;color:#0b1b5e;font-weight:700;white-space:nowrap;">IPA NAPS #2</div>
<div style="left:1405.3px;top:650px;width:1.4px;height:25px;background:#c2c2c2"></div><div style="left:1430.3px;top:650px;width:1.4px;height:25px;background:#c2c2c2"></div><div style="left:1455.3px;top:650px;width:1.4px;height:25px;background:#c2c2c2"></div><div style="left:1480.3px;top:650px;width:1.4px;height:25px;background:#c2c2c2"></div><div style="left:1505.3px;top:650px;width:1.4px;height:25px;background:#c2c2c2"></div><div style="left:1530.3px;top:650px;width:1.4px;height:25px;background:#c2c2c2"></div>
<div style="left:1548.3px;top:650px;width:1.4px;height:25px;background:#c2c2c2"></div><div style="left:1573.5px;top:650px;width:1.4px;height:25px;background:#c2c2c2"></div><div style="left:1598.7px;top:650px;width:1.4px;height:25px;background:#c2c2c2"></div><div style="left:1623.9px;top:650px;width:1.4px;height:25px;background:#c2c2c2"></div><div style="left:1649.1px;top:650px;width:1.4px;height:25px;background:#c2c2c2"></div><div style="left:1674.3px;top:650px;width:1.4px;height:25px;background:#c2c2c2"></div>
<div class="g" style="left:1404px;top:648px;width:126px;height:17px"><b style="font-size:21px;line-height:15.5px;transform:scaleX(0.95)">0</b></div>
<div class="g" style="left:1547px;top:648px;width:126px;height:17px"><b style="font-size:21px;line-height:15.5px;transform:scaleX(0.95)">0.0</b></div>
<div style="left:1386.0px;top:674.0px;line-height:13px;height:13px;font-size:10.3px;color:#0b1b5e;font-weight:400;white-space:nowrap;width:40px;text-align:center;">0</div><div style="left:1411.0px;top:674.0px;line-height:13px;height:13px;font-size:10.3px;color:#0b1b5e;font-weight:400;white-space:nowrap;width:40px;text-align:center;">10</div><div style="left:1436.0px;top:674.0px;line-height:13px;height:13px;font-size:10.3px;color:#0b1b5e;font-weight:400;white-space:nowrap;width:40px;text-align:center;">20</div><div style="left:1461.0px;top:674.0px;line-height:13px;height:13px;font-size:10.3px;color:#0b1b5e;font-weight:400;white-space:nowrap;width:40px;text-align:center;">30</div><div style="left:1486.0px;top:674.0px;line-height:13px;height:13px;font-size:10.3px;color:#0b1b5e;font-weight:400;white-space:nowrap;width:40px;text-align:center;">40</div><div style="left:1511.0px;top:674.0px;line-height:13px;height:13px;font-size:10.3px;color:#0b1b5e;font-weight:400;white-space:nowrap;width:40px;text-align:center;">50</div>
<div style="left:1529.0px;top:674.0px;line-height:13px;height:13px;font-size:10.3px;color:#0b1b5e;font-weight:400;white-space:nowrap;width:40px;text-align:center;">0</div><div style="left:1554.2px;top:674.0px;line-height:13px;height:13px;font-size:10.3px;color:#0b1b5e;font-weight:400;white-space:nowrap;width:40px;text-align:center;">40</div><div style="left:1579.4px;top:674.0px;line-height:13px;height:13px;font-size:10.3px;color:#0b1b5e;font-weight:400;white-space:nowrap;width:40px;text-align:center;">80</div><div style="left:1604.6px;top:674.0px;line-height:13px;height:13px;font-size:10.3px;color:#0b1b5e;font-weight:400;white-space:nowrap;width:40px;text-align:center;">120</div><div style="left:1629.8px;top:674.0px;line-height:13px;height:13px;font-size:10.3px;color:#0b1b5e;font-weight:400;white-space:nowrap;width:40px;text-align:center;">160</div><div style="left:1655.0px;top:674.0px;line-height:13px;height:13px;font-size:10.3px;color:#0b1b5e;font-weight:400;white-space:nowrap;width:40px;text-align:center;">200</div>
<div class="tab" style="left:1732px;top:384px;width:178px;height:23px;"></div>
<div style="left:1646.0px;top:386.0px;line-height:19px;height:19px;font-size:14.5px;color:#e4eaff;font-weight:700;white-space:nowrap;width:300px;text-align:center;transform:scaleX(0.88);transform-origin:50% 50%;">NAPS Flow</div>
<div style="left:1704px;top:388.0px;line-height:17px;height:17px;font-size:13px;color:#e4eaff;font-weight:400;white-space:nowrap;width:200px;text-align:right;">[L/min]</div>
<div class="pbody" style="left:1710px;top:407px;width:194px;height:165px;"></div>
<div style="left:1769.8px;top:416px;width:1.4px;height:144px;background:#c2c2c2"></div><div style="left:1793.7px;top:416px;width:1.4px;height:144px;background:#c2c2c2"></div><div style="left:1817.6px;top:416px;width:1.4px;height:144px;background:#c2c2c2"></div><div style="left:1841.5px;top:416px;width:1.4px;height:144px;background:#c2c2c2"></div><div style="left:1865.4px;top:416px;width:1.4px;height:144px;background:#c2c2c2"></div><div style="left:1889.3px;top:416px;width:1.4px;height:144px;background:#c2c2c2"></div>
<div style="left:1723px;top:417.5px;line-height:17px;height:17px;font-size:13px;color:#0b1b5e;font-weight:700;white-space:nowrap;">#1IJT</div>
<div class="g" style="left:1768px;top:415px;width:120px;height:17px"><i style="width:116.5px;background:linear-gradient(180deg,#52e6de 0%,#14c4c4 45%,#22cccc 70%,#5ae0da 100%)"></i><b style="font-size:21px;line-height:15.5px;transform:scaleX(0.95)">777</b></div>
<div style="left:1723px;top:441.5px;line-height:17px;height:17px;font-size:13px;color:#0b1b5e;font-weight:700;white-space:nowrap;">#2IJT</div>
<div class="g" style="left:1768px;top:439px;width:120px;height:17px"><i style="width:49.6px;background:linear-gradient(180deg,#52e6de 0%,#14c4c4 45%,#22cccc 70%,#5ae0da 100%)"></i><b style="font-size:21px;line-height:15.5px;transform:scaleX(0.95)">331</b></div>
<div style="left:1723px;top:465.5px;line-height:17px;height:17px;font-size:13px;color:#0b1b5e;font-weight:700;white-space:nowrap;">#3IJT</div>
<div class="g" style="left:1768px;top:463px;width:120px;height:17px"><i style="width:100.4px;background:linear-gradient(180deg,#52e6de 0%,#14c4c4 45%,#22cccc 70%,#5ae0da 100%)"></i><b style="font-size:21px;line-height:15.5px;transform:scaleX(0.95)">669</b></div>
<div style="left:1723px;top:489.5px;line-height:17px;height:17px;font-size:13px;color:#0b1b5e;font-weight:700;white-space:nowrap;">#4IJT</div>
<div class="g" style="left:1768px;top:487px;width:120px;height:17px"><i style="width:99.8px;background:linear-gradient(180deg,#52e6de 0%,#14c4c4 45%,#22cccc 70%,#5ae0da 100%)"></i><b style="font-size:21px;line-height:15.5px;transform:scaleX(0.95)">665</b></div>
<div style="left:1723px;top:513.5px;line-height:17px;height:17px;font-size:13px;color:#0b1b5e;font-weight:700;white-space:nowrap;">#5IJT</div>
<div class="g" style="left:1768px;top:511px;width:120px;height:17px"><i style="width:26.7px;background:linear-gradient(180deg,#52e6de 0%,#14c4c4 45%,#22cccc 70%,#5ae0da 100%)"></i><b style="font-size:21px;line-height:15.5px;transform:scaleX(0.95)">178</b></div>
<div style="left:1723px;top:537.5px;line-height:17px;height:17px;font-size:13px;color:#0b1b5e;font-weight:700;white-space:nowrap;">#6IJT</div>
<div class="g" style="left:1768px;top:535px;width:120px;height:17px"><b style="font-size:21px;line-height:15.5px;transform:scaleX(0.95)">-1</b></div>
<div style="left:1750.5px;top:560.0px;line-height:13px;height:13px;font-size:10.3px;color:#0b1b5e;font-weight:400;white-space:nowrap;width:40px;text-align:center;">0</div><div style="left:1774.4px;top:560.0px;line-height:13px;height:13px;font-size:10.3px;color:#0b1b5e;font-weight:400;white-space:nowrap;width:40px;text-align:center;">160</div><div style="left:1798.3px;top:560.0px;line-height:13px;height:13px;font-size:10.3px;color:#0b1b5e;font-weight:400;white-space:nowrap;width:40px;text-align:center;">320</div><div style="left:1822.2px;top:560.0px;line-height:13px;height:13px;font-size:10.3px;color:#0b1b5e;font-weight:400;white-space:nowrap;width:40px;text-align:center;">480</div><div style="left:1846.1px;top:560.0px;line-height:13px;height:13px;font-size:10.3px;color:#0b1b5e;font-weight:400;white-space:nowrap;width:40px;text-align:center;">640</div><div style="left:1870.0px;top:560.0px;line-height:13px;height:13px;font-size:10.3px;color:#0b1b5e;font-weight:400;white-space:nowrap;width:40px;text-align:center;">800</div>
<div class="tab" style="left:1737px;top:632px;width:173px;height:22px;"></div>
<div style="left:1673.5px;top:633.5px;line-height:19px;height:19px;font-size:14.5px;color:#e4eaff;font-weight:700;white-space:nowrap;width:300px;text-align:center;transform:scaleX(0.88);transform-origin:50% 50%;">COILER</div>
<div class="pbody" style="left:1715px;top:654px;width:189px;height:67px;"></div>
<div style="left:1727px;top:667.0px;line-height:18px;height:18px;font-size:14px;color:#0b1b5e;font-weight:700;white-space:nowrap;">Weight</div>
<div style="left:1727px;top:697.0px;line-height:18px;height:18px;font-size:14px;color:#0b1b5e;font-weight:700;white-space:nowrap;">Length</div>
<div style="left:1781px;top:660px;width:123px;height:30px;background:#fcc010"></div>
<div style="left:1777.0px;top:664.0px;line-height:25px;height:25px;font-size:19.5px;color:#0b1b5e;font-weight:400;white-space:nowrap;width:100px;text-align:center;">797</div>
<div style="left:1840px;top:665.0px;line-height:18px;height:18px;font-size:14px;color:#0b1b5e;font-weight:400;white-space:nowrap;width:60px;text-align:right;">[Kg]</div>
<div style="left:1781px;top:691.5px;width:123px;height:29.5px;background:#fcc010"></div>
<div style="left:1777.0px;top:695.2px;line-height:25px;height:25px;font-size:19.5px;color:#0b1b5e;font-weight:400;white-space:nowrap;width:100px;text-align:center;transform:scaleX(0.95);transform-origin:50% 50%;">1,782</div>
<div style="left:1840px;top:696.2px;line-height:18px;height:18px;font-size:14px;color:#0b1b5e;font-weight:400;white-space:nowrap;width:60px;text-align:right;">[m]</div>
<div style="left:1750px;top:741.0px;line-height:17px;height:17px;font-size:12.8px;color:#3a3a3a;font-weight:400;white-space:nowrap;">Coil Handling System</div>
<div style="left:1765px;top:771.5px;line-height:17px;height:17px;font-size:13.2px;color:#0b1b5e;font-weight:700;white-space:nowrap;">ST#1</div>
<div style="left:1805px;top:766px;width:105px;height:28px;background:#000"></div>
<div style="left:1799.0px;top:767.5px;line-height:27px;height:27px;font-size:20.5px;color:#adff2f;font-weight:400;white-space:nowrap;width:80px;text-align:center;">72</div>
<div style="left:1845px;top:770.0px;line-height:18px;height:18px;font-size:14px;color:#adff2f;font-weight:400;white-space:nowrap;width:60px;text-align:right;">[Kg]</div>
<div style="left:1765px;top:801.5px;line-height:17px;height:17px;font-size:13.2px;color:#0b1b5e;font-weight:700;white-space:nowrap;">ST#3</div>
<div style="left:1805px;top:796px;width:105px;height:28px;background:#000"></div>
<div style="left:1799.0px;top:797.5px;line-height:27px;height:27px;font-size:20.5px;color:#adff2f;font-weight:400;white-space:nowrap;width:80px;text-align:center;">0</div>
<div style="left:1845px;top:800.0px;line-height:18px;height:18px;font-size:14px;color:#adff2f;font-weight:400;white-space:nowrap;width:60px;text-align:right;">[Kg]</div>
<div style="left:278px;top:521.0px;line-height:16px;height:16px;font-size:12.6px;color:#222;font-weight:400;white-space:nowrap;">Shaft Furnace</div>
<div style="left:42px;top:581.0px;line-height:16px;height:16px;font-size:12.6px;color:#222;font-weight:400;white-space:nowrap;">Skip Loader</div>
<div style="left:1172px;top:694.5px;line-height:16px;height:16px;font-size:12.4px;color:#222;font-weight:400;white-space:nowrap;">Pickling Line (Reject Box 6EA)</div>
<div style="left:844.5px;top:660.0px;line-height:16px;height:16px;font-size:12.6px;color:#222;font-weight:400;white-space:nowrap;width:200px;text-align:right;">Rolling Mill</div>
<div style="left:370px;top:314px;width:50px;height:30px;background:#0e2a78"></div>
<div style="left:421px;top:314px;width:149px;height:30px;background:#000;color:#adff2f;font-size:18px;line-height:38px;text-align:center;font-weight:400;-webkit-text-stroke:.35px #adff2f;">46.52</div>
<div style="left:580px;top:314px;width:50px;height:30px;background:#0e2a78"></div>
<div style="left:631px;top:314px;width:149px;height:30px;background:#000;color:#adff2f;font-size:18px;line-height:38px;text-align:center;font-weight:400;-webkit-text-stroke:.35px #adff2f;">46.52</div>
<div style="left:35px;top:845px;width:1706px;height:7px;background:linear-gradient(180deg,#7a7a7a 0,#e8e8e8 35%,#f4f4f4 60%,#8a8a8a 100%)"></div>
<div style="left:10px;top:852px;width:1730px;height:34px;background:linear-gradient(180deg,#17753c 0%,#3e9238 35%,#86b940 75%,#a9cc48 100%)"></div>
<svg style="left:10px;top:852px" width="1730" height="34" viewBox="0 0 1730 34" fill="none" stroke="#cfe2a0" stroke-width="1.2" opacity="0.8"><path d="M148 0 L160 17 L148 34"/><path d="M296 0 L308 17 L296 34"/><path d="M557 0 L569 17 L557 34"/><path d="M1581 0 L1593 17 L1581 34"/></svg>
<div style="left:-9.0px;top:860.0px;line-height:20px;height:20px;font-size:15.5px;color:#fff;font-weight:700;white-space:nowrap;width:200px;text-align:center;transform:scaleX(0.93);transform-origin:50% 50%;">CHARGE</div>
<div style="left:135.0px;top:860.0px;line-height:20px;height:20px;font-size:15.5px;color:#fff;font-weight:700;white-space:nowrap;width:200px;text-align:center;transform:scaleX(0.93);transform-origin:50% 50%;">MELT</div>
<div style="left:340.0px;top:860.0px;line-height:20px;height:20px;font-size:15.5px;color:#fff;font-weight:700;white-space:nowrap;width:200px;text-align:center;transform:scaleX(0.93);transform-origin:50% 50%;">CAST</div>
<div style="left:1272.0px;top:860.0px;line-height:20px;height:20px;font-size:15.5px;color:#fff;font-weight:700;white-space:nowrap;width:200px;text-align:center;transform:scaleX(0.93);transform-origin:50% 50%;">PICKLING</div>
<div style="left:1564.0px;top:860.0px;line-height:20px;height:20px;font-size:15.5px;color:#fff;font-weight:700;white-space:nowrap;width:200px;text-align:center;transform:scaleX(0.93);transform-origin:50% 50%;">COILING</div>
<div style="left:0px;top:886px;width:1920px;height:6px;background:linear-gradient(180deg,#f6f6f6 0,#ececec 50%,#a6a6a6 55%,#8e8e8e 100%)"></div>
<div style="left:0px;top:892px;width:1920px;height:118px;background:#000"></div>
<div style="left:7px;top:898.5px;line-height:18px;height:18px;font-size:12.85px;color:#ff2a2a;font-weight:400;white-space:pre;overflow:hidden;width:585px;text-align:left;font-family:'Liberation Mono','DejaVu Sans Mono',monospace;">2024-12-10 15:19:46.701 | E | ROLLING SelectData | No rows in table!</div>
<div style="left:7px;top:916.9px;line-height:18px;height:18px;font-size:12.85px;color:#ff2a2a;font-weight:400;white-space:pre;overflow:hidden;width:585px;text-align:left;font-family:'Liberation Mono','DejaVu Sans Mono',monospace;">2024-12-10 15:19:30.069 | E | CASTING SelectData Jobsheet | No rows in table!</div>
<div style="left:7px;top:935.2px;line-height:18px;height:18px;font-size:12.85px;color:#ff2a2a;font-weight:400;white-space:pre;overflow:hidden;width:585px;text-align:left;font-family:'Liberation Mono','DejaVu Sans Mono',monospace;">2024-12-10 15:19:26.581 | E | CASTING Jobsheet Casting SelectData | No rows in table!</div>
<div style="left:7px;top:953.5px;line-height:18px;height:18px;font-size:12.85px;color:#ff2a2a;font-weight:400;white-space:pre;overflow:hidden;width:585px;text-align:left;font-family:'Liberation Mono','DejaVu Sans Mono',monospace;">2024-12-10 15:18:26.236 | E | MELTING FURNACE Select | No rows in table!</div>
<div style="left:7px;top:971.9px;line-height:18px;height:18px;font-size:12.85px;color:#ff2a2a;font-weight:400;white-space:pre;overflow:hidden;width:585px;text-align:left;font-family:'Liberation Mono','DejaVu Sans Mono',monospace;">2024-12-10 15:07:34.000 | I | L1RCV Pc=[0],Ip=[localhost] [CMS]N70[200].14 Rcv</div>
<div style="left:7px;top:990.2px;line-height:18px;height:18px;font-size:12.85px;color:#ff2a2a;font-weight:400;white-space:pre;overflow:hidden;width:585px;text-align:left;font-family:'Liberation Mono','DejaVu Sans Mono',monospace;">2024-12-10 15:07:34.000 | I | L1RCV Pc=[0],Ip=[localhost] [CMS]N70[198].5 Rcv</div>
<svg style="left:1902px;top:898px" width="16" height="16" viewBox="0 0 16 16"><rect width="16" height="16" fill="#8c8c8c"/><path d="M8 12.500V4M4.500 7.500L8 4l3.500 3.500" stroke="#555" fill="none" stroke-width="1"/></svg>
<svg style="left:1902px;top:992px" width="16" height="16" viewBox="0 0 16 16"><rect width="16" height="16" fill="#8c8c8c"/><path d="M8 3.500V12M4.500 8.500L8 12l3.500-3.500" stroke="#555" fill="none" stroke-width="1"/></svg>
<div style="left:1599px;top:945.0px;line-height:26px;height:26px;font-size:20px;color:#8a8a8a;font-weight:400;white-space:nowrap;">Activate Windows</div>
<div style="left:1599px;top:971.0px;line-height:20px;height:20px;font-size:15px;color:#8a8a8a;font-weight:400;white-space:nowrap;">Go to Settings to activate Windows.</div>
<div style="left:0px;top:1010px;width:1920px;height:30px;background:#f2f2f2"></div>
<div style="left:0px;top:1010.500px;width:165px;height:29.500px;background:linear-gradient(180deg,#1f3e9e 0%,#2c50bc 50%,#3a62d2 100%);color:#fff;font-weight:700;font-size:14.5px;line-height:30px;text-align:center;white-space:nowrap;letter-spacing:-0.55px">2024/12/10 15:23:22</div>
<div style="left:166px;top:1010.500px;width:62.5px;height:29.500px;background:linear-gradient(180deg,#1f3e9e 0%,#2c50bc 50%,#3a62d2 100%);color:#fff;font-weight:700;font-size:14.5px;line-height:30px;text-align:center;white-space:nowrap;letter-spacing:-0.55px">Admin</div>
<div style="left:229.5px;top:1010.500px;width:74px;height:29.500px;background:linear-gradient(180deg,#1f3e9e 0%,#2c50bc 50%,#3a62d2 100%);color:#fff;font-weight:700;font-size:14.5px;line-height:30px;text-align:center;white-space:nowrap;letter-spacing:-0.55px">&nbsp;&nbsp;&nbsp; Voice</div>
<div style="left:304.5px;top:1010.500px;width:62.5px;height:29.500px;background:linear-gradient(180deg,#1f3e9e 0%,#2c50bc 50%,#3a62d2 100%);color:#fff;font-weight:700;font-size:14.5px;line-height:30px;text-align:center;white-space:nowrap;letter-spacing:-0.55px">&nbsp;&nbsp;&nbsp; Bell</div>
<div style="left:368px;top:1010.500px;width:89.5px;height:29.500px;background:linear-gradient(180deg,#3a9a18 0%,#6cc024 50%,#a4e236 100%);color:#fff;font-weight:700;font-size:14.5px;line-height:30px;text-align:center;white-space:nowrap;letter-spacing:-0.55px">DataBase 1</div>
<div style="left:458.5px;top:1010.500px;width:90px;height:29.500px;background:linear-gradient(180deg,#3a9a18 0%,#6cc024 50%,#a4e236 100%);color:#fff;font-weight:700;font-size:14.5px;line-height:30px;text-align:center;white-space:nowrap;letter-spacing:-0.55px">DataBase 2</div>
<div style="left:549.5px;top:1010.500px;width:60px;height:29.500px;background:linear-gradient(180deg,#3a9a18 0%,#6cc024 50%,#a4e236 100%);color:#fff;font-weight:700;font-size:14.5px;line-height:30px;text-align:center;white-space:nowrap;letter-spacing:-0.55px">Server</div>
<svg style="left:240px;top:1018px" width="12" height="15" viewBox="0 0 12 15" fill="none" stroke="#fff" stroke-width="1.3"><circle cx="3" cy="2.500" r="1.600"/><circle cx="3" cy="12" r="1.600"/><circle cx="9.500" cy="3.500" r="1.600"/><path d="M3 4v6.500M9.500 5c0 3-6.500 2-6.500 5"/></svg>
<svg style="left:316px;top:1018px" width="12" height="14" viewBox="0 0 12 14" fill="#fff"><path d="M6 0.500c-2.600 0-4 2-4 4.500v3L0.500 10.500v1h11v-1L10 8V5c0-2.500-1.400-4.500-4-4.500z"/><path d="M4.500 12.500a1.500 1.500 0 003 0z"/></svg>
<svg style="left:1798px;top:1010px" width="122" height="30" viewBox="0 0 122 30">
<defs><linearGradient id="apb" x1="0" x2="1" y1="0" y2="1"><stop offset="0" stop-color="#1f9af0"/><stop offset="1" stop-color="#0a36b0"/></linearGradient>
<linearGradient id="apt" x1="0" x2="1" y1="0" y2="0"><stop offset="0" stop-color="#1c98ec"/><stop offset=".45" stop-color="#0c6cd8"/><stop offset="1" stop-color="#0a4cc4"/></linearGradient></defs>
<rect width="122" height="30" fill="#fff"/>
<path d="M12.500 2.700 L23 8.500 L23 21 L12.500 27 L2 21 L2 8.500Z" fill="url(#apb)"/>
<path d="M6 10.500 L13.500 4 L23 8.500 L23 16.500 L16 10.500 L8.500 13.500 Q5.500 13 6 10.500Z" fill="#d41414"/>
<path d="M5 21 L15 13.500 M7 23 L17.500 15 M9.500 24.500 L20 16.500 M12.500 25.500 L22 18.500" stroke="#fff" stroke-width="1.100"/>
<text x="26" y="17" font-family="Liberation Sans, sans-serif" font-size="18" font-weight="700" fill="url(#apt)" stroke="url(#apt)" stroke-width=".6" textLength="94" lengthAdjust="spacingAndGlyphs">AN PHAT</text>
<text x="34.500" y="26" font-family="Liberation Sans, sans-serif" font-size="5.600" font-weight="700" font-style="italic" fill="#d41414" stroke="#d41414" stroke-width=".25" textLength="77" lengthAdjust="spacingAndGlyphs">AUTOMATION - TECHNOLOGY</text></svg>
<div style="left:0px;top:1040px;width:1920px;height:40px;background:#0b0e17"></div>
<div style="left:245px;top:1040px;width:45px;height:40px;background:#393c44"></div>
<div style="left:290px;top:1040px;width:3px;height:40px;background:#2a2d35"></div>
<div style="left:245px;top:1078px;width:45px;height:2px;background:#82bdee"></div>
<div style="left:298px;top:1078px;width:40px;height:2px;background:#82bdee"></div>
<svg style="left:16px;top:1052px" width="17" height="17" viewBox="0 0 17 17" fill="#fff"><path d="M0 2.300L7 1.300V8H0zM8 1.150L17 0V8H8zM0 9H7v6.700L0 14.700zM8 9h9v8L8 15.850z"/></svg>
<svg style="left:63px;top:1050px" width="20" height="20" viewBox="0 0 20 20" fill="none" stroke="#fff" stroke-width="1.500"><circle cx="12" cy="7.500" r="5.200"/><path d="M8.300 11.200L1.500 18"/></svg>
<svg style="left:110px;top:1051px" width="20" height="18" viewBox="0 0 20 18" fill="none" stroke="#fff" stroke-width="1.300"><rect x="3.500" y="4.500" width="10" height="9"/><path d="M1 1v3M1 14v3M3.500 1.500h10M3.500 16.500h10M17 4.500v9M17 1v1.500M17 15.500v1.500"/></svg>
<svg style="left:160px;top:1049px" width="24" height="22" viewBox="0 0 24 22"><path d="M1 3h8l2 2h11v15H1z" fill="#f6cf5e"/><path d="M1 7h21v13H1z" fill="#fce292"/><path d="M5 13h13v7H5z" fill="#35a4e6"/><path d="M8 16h7v4H8z" fill="#fce292"/></svg>
<svg style="left:207px;top:1047px" width="26" height="26" viewBox="0 0 26 26"><circle cx="13" cy="13" r="12" fill="#e33b2e"/><path d="M13 13 L2.600 7 A12 12 0 0 0 13 25 L18.500 15.500z" fill="#2da94f"/><path d="M13 13 L18.500 15.500 L13 25 A12 12 0 0 0 23.400 7 L13 7z" fill="#fdd03b"/><circle cx="13" cy="13" r="5.500" fill="#fff"/><circle cx="13" cy="13" r="4.300" fill="#4285f4"/></svg>
<div style="left:257px;top:1048px;width:24px;height:24px;background:#fff"></div>
<svg style="left:258.5px;top:1050px" width="24" height="19" viewBox="0 0 44 26">
<g transform="skewX(-7)"><text x="4" y="24" font-family="Liberation Sans, sans-serif" font-size="27" font-weight="700" fill="#0b1b6e" stroke="#0b1b6e" stroke-width="2.4" textLength="33" lengthAdjust="spacingAndGlyphs">LS</text></g>
<path d="M31 3.500 Q38 0 44 0.500 L38 5 Q35 3 31 3.500Z" fill="#e8283c"/></svg>
<svg style="left:307px;top:1049px" width="22" height="22" viewBox="0 0 24 24" fill="#fff"><path d="M19.140 12.940c.04-.3.060-.610.060-.940 0-.320-.020-.640-.070-.940l2.030-1.580a.49.490 0 00.120-.610l-1.920-3.320a.488.488 0 00-.590-.220l-2.390.960c-.5-.380-1.030-.7-1.620-.940l-.360-2.540a.484.484 0 00-.480-.410h-3.840c-.240 0-.430.170-.470.410l-.360 2.540c-.59.240-1.130.57-1.620.940l-2.390-.960c-.220-.080-.470 0-.590.220L2.740 8.870c-.12.210-.8.470.12.610l2.030 1.580c-.5.300-.9.630-.9.940s.2.640.7.940l-2.030 1.580a.49.490 0 00-.12.610l1.920 3.320c.12.220.37.290.59.220l2.390-.960c.5.380 1.030.7 1.620.940l.36 2.540c.5.240.24.410.48.410h3.840c.24 0 .44-.17.470-.410l.36-2.540c.59-.24 1.130-.56 1.620-.940l2.390.960c.22.080.47 0 .59-.220l1.920-3.320c.12-.22.070-.47-.12-.610l-2.010-1.580zM12 17c-2.760 0-5-2.240-5-5s2.240-5 5-5 5 2.240 5 5-2.240 5-5 5z"/></svg>
<svg style="left:1735px;top:1054px" width="14" height="10" viewBox="0 0 14 10" fill="none" stroke="#fff" stroke-width="1.200"><path d="M1 8l6-6 6 6"/></svg>
<svg style="left:1759px;top:1050px" width="18" height="18" viewBox="0 0 18 18" fill="none" stroke="#fff" stroke-width="1.100"><rect x="3.500" y="3.500" width="11" height="8"/><path d="M1 1.500h3v3M1 1.500v10M6 14.500h6M9 11.500v3"/><path d="M12.500 9l4 7h-8z" fill="#f6c21c" stroke="none"/></svg>
<svg style="left:1783px;top:1051px" width="18" height="16" viewBox="0 0 18 16" fill="none" stroke="#fff" stroke-width="1.100"><path d="M1.500 5.500h3l4-3.500v12l-4-3.500h-3z"/><path d="M11.500 5.500l4 4M15.500 5.500l-4 4"/></svg>
<div style="left:1790.0px;top:1043.0px;line-height:16px;height:16px;font-size:12px;color:#fff;font-weight:400;white-space:nowrap;width:90px;text-align:center;">3:23 PM</div>
<div style="left:1790.0px;top:1060.0px;line-height:16px;height:16px;font-size:12px;color:#fff;font-weight:400;white-space:nowrap;width:90px;text-align:center;">12/10/2024</div>
<svg style="left:1878px;top:1049px" width="26" height="24" viewBox="0 0 26 24"><path d="M1.500 2.500h15v11h-9l-3 3v-3h-3z" fill="#fff"/><path d="M4 5.500h10M4 8h10M4 10.500h7" stroke="#0d121e" stroke-width="1"/><circle cx="17" cy="15.500" r="6" fill="#3a3d44" stroke="#777" stroke-width="0.800"/><text x="17" y="19.500" font-family="Liberation Sans, sans-serif" font-size="10.500" font-weight="700" fill="#fff" text-anchor="middle">1</text></svg>
<div style="left:1914px;top:1040px;width:1px;height:40px;background:#4a4e58"></div>
<div class="win" style="left:365px;top:323px;width:644px;height:380px">
<div style="left:0px;top:0px;width:644px;height:30px;background:#fff"></div>
<svg style="left:8px;top:7px" width="15" height="12" viewBox="0 0 44 26">
<g transform="skewX(-7)"><text x="4" y="24" font-family="Liberation Sans, sans-serif" font-size="27" font-weight="700" fill="#0b1b6e" stroke="#0b1b6e" stroke-width="2.4" textLength="33" lengthAdjust="spacingAndGlyphs">LS</text></g>
<path d="M31 3.500 Q38 0 44 0.500 L38 5 Q35 3 31 3.500Z" fill="#e8283c"/></svg>
<svg style="left:509px;top:0" width="137" height="30" viewBox="0 0 137 30" fill="none" stroke="#8a8a8a" stroke-width="1"><path d="M16 14.500h10"/><path d="M61.500 9.500h9v9h-9z"/><path d="M107.500 9.500l10 10M117.500 9.500l-10 10"/></svg>
<svg style="left:2.5px;top:32.19999999999999px" width="21" height="21" viewBox="0 0 24 24"><defs><linearGradient id="gg365" x1="0" x2="0" y1="0" y2="1"><stop offset="0" stop-color="#1a3688"/><stop offset="1" stop-color="#3262dc"/></linearGradient></defs><path fill="url(#gg365)" d="M19.140 12.940c.04-.3.060-.610.060-.940 0-.320-.020-.640-.070-.940l2.030-1.580a.49.490 0 00.120-.610l-1.920-3.320a.488.488 0 00-.590-.220l-2.390.960c-.5-.380-1.030-.7-1.620-.940l-.360-2.540a.484.484 0 00-.480-.410h-3.840c-.240 0-.430.170-.470.410l-.360 2.540c-.59.240-1.130.57-1.620.940l-2.390-.960c-.220-.080-.470 0-.590.220L2.740 8.870c-.12.210-.8.470.12.610l2.030 1.580c-.5.300-.9.630-.9.940s.2.640.7.940l-2.030 1.580a.49.490 0 00-.12.610l1.920 3.320c.12.220.37.290.59.220l2.390-.960c.5.380 1.030.7 1.620.940l.36 2.540c.5.240.24.410.48.410h3.840c.24 0 .44-.17.470-.410l.36-2.540c.59-.24 1.130-.56 1.620-.940l2.390.960c.22.080.47 0 .59-.220l1.920-3.320c.12-.22.070-.47-.12-.610l-2.010-1.580zM12 15.600c-1.980 0-3.600-1.620-3.600-3.600s1.620-3.600 3.600-3.600 3.600 1.620 3.600 3.600-1.620 3.600-3.600 3.600z"/></svg>
<div style="left:34px;top:35.7px;line-height:16px;height:16px;font-size:12px;color:#3b4c8c;font-weight:400;white-space:nowrap;">Tuesday, 10/12/2024</div>
<svg style="left:175.5px;top:36.69999999999999px" width="12" height="12" viewBox="0 0 12 12"><circle cx="6" cy="6" r="5.500" fill="#3d5cc0"/><path d="M6 2.500V6l2.300 1.600" stroke="#fff" stroke-width="1.200" fill="none"/></svg>
<div style="left:191px;top:35.7px;line-height:16px;height:16px;font-size:12px;color:#3b4c8c;font-weight:400;white-space:nowrap;transform:scaleX(0.95);transform-origin:0 50%;">15:23:21</div>
<div style="left:344.5px;top:36.3px;line-height:16px;height:16px;font-size:12px;color:#4e5a7c;font-weight:400;white-space:nowrap;transform:scaleX(0.955);transform-origin:0 50%;">[N9:3] *A1 RED TEMP</div>
<div style="left:566px;top:41.69999999999999px;width:20px;height:2px;background:#10b4ee"></div>
<div style="left:590px;top:35.7px;line-height:16px;height:16px;font-size:12px;color:#3b4c8c;font-weight:400;white-space:nowrap;">34 points</div>
<div style="left:79.89999999999998px;top:64.30000000000001px;width:1px;height:277.7px;background:#e0e0e0"></div>
<div style="left:79.89999999999998px;top:337px;width:1px;height:5px;background:#777"></div>
<div style="left:195.5px;top:64.30000000000001px;width:1px;height:277.7px;background:#e0e0e0"></div>
<div style="left:195.5px;top:337px;width:1px;height:5px;background:#777"></div>
<div style="left:312.5px;top:64.30000000000001px;width:1px;height:277.7px;background:#e0e0e0"></div>
<div style="left:312.5px;top:337px;width:1px;height:5px;background:#777"></div>
<div style="left:428.5px;top:64.30000000000001px;width:1px;height:277.7px;background:#e0e0e0"></div>
<div style="left:428.5px;top:337px;width:1px;height:5px;background:#777"></div>
<div style="left:545.5px;top:64.30000000000001px;width:1px;height:277.7px;background:#e0e0e0"></div>
<div style="left:545.5px;top:337px;width:1px;height:5px;background:#777"></div>
<div style="left:56px;top:63.80000000000001px;width:583px;height:1px;background:#e6e6e6"></div>
<div style="left:56px;top:202.65px;width:583px;height:1px;background:#e0e0e0"></div>
<div style="left:55.5px;top:64.30000000000001px;width:1.2px;height:277.7px;background:#777"></div>
<div style="left:55.5px;top:341.5px;width:583px;height:1.2px;background:#777"></div>
<div style="left:49px;top:63.80000000000001px;width:7px;height:1px;background:#777"></div>
<div style="left:52.5px;top:91.57000000000001px;width:3.5px;height:1px;background:#777"></div>
<div style="left:52.5px;top:119.34px;width:3.5px;height:1px;background:#777"></div>
<div style="left:52.5px;top:147.11px;width:3.5px;height:1px;background:#777"></div>
<div style="left:52.5px;top:174.88px;width:3.5px;height:1px;background:#777"></div>
<div style="left:49px;top:202.65px;width:7px;height:1px;background:#777"></div>
<div style="left:52.5px;top:230.42px;width:3.5px;height:1px;background:#777"></div>
<div style="left:52.5px;top:258.19px;width:3.5px;height:1px;background:#777"></div>
<div style="left:52.5px;top:285.96000000000004px;width:3.5px;height:1px;background:#777"></div>
<div style="left:52.5px;top:313.73px;width:3.5px;height:1px;background:#777"></div>
<div style="left:49px;top:341.5px;width:7px;height:1px;background:#777"></div>
<div style="left:4px;top:56.8px;line-height:16px;height:16px;font-size:12.5px;color:#747474;font-weight:700;white-space:nowrap;width:40px;text-align:right;">100</div>
<div style="left:4px;top:195.7px;line-height:16px;height:16px;font-size:12.5px;color:#747474;font-weight:700;white-space:nowrap;width:40px;text-align:right;">50</div>
<div style="left:4px;top:334.5px;line-height:16px;height:16px;font-size:12.5px;color:#747474;font-weight:700;white-space:nowrap;width:40px;text-align:right;">0</div>
<div style="left:-3px;top:195.15px;width:40px;height:16px;line-height:16px;text-align:center;font-size:11px;font-weight:700;color:#7a7a7a;transform:rotate(-90deg);white-space:nowrap">[°C]</div>
<div style="left:28.399999999999977px;top:345.5px;line-height:16px;height:16px;font-size:12px;color:#747474;font-weight:700;white-space:nowrap;width:100px;text-align:center;">15:23:00</div>
<div style="left:29.399999999999977px;top:360.5px;line-height:16px;height:16px;font-size:12px;color:#747474;font-weight:700;white-space:nowrap;width:100px;text-align:center;letter-spacing:.45px;">10/12/2024</div>
<div style="left:144.0px;top:345.5px;line-height:16px;height:16px;font-size:12px;color:#747474;font-weight:700;white-space:nowrap;width:100px;text-align:center;">15:24:00</div>
<div style="left:145.0px;top:360.5px;line-height:16px;height:16px;font-size:12px;color:#747474;font-weight:700;white-space:nowrap;width:100px;text-align:center;letter-spacing:.45px;">10/12/2024</div>
<div style="left:261.0px;top:345.5px;line-height:16px;height:16px;font-size:12px;color:#747474;font-weight:700;white-space:nowrap;width:100px;text-align:center;">15:25:00</div>
<div style="left:262.0px;top:360.5px;line-height:16px;height:16px;font-size:12px;color:#747474;font-weight:700;white-space:nowrap;width:100px;text-align:center;letter-spacing:.45px;">10/12/2024</div>
<div style="left:377.0px;top:345.5px;line-height:16px;height:16px;font-size:12px;color:#747474;font-weight:700;white-space:nowrap;width:100px;text-align:center;">15:26:00</div>
<div style="left:378.0px;top:360.5px;line-height:16px;height:16px;font-size:12px;color:#747474;font-weight:700;white-space:nowrap;width:100px;text-align:center;letter-spacing:.45px;">10/12/2024</div>
<div style="left:494.0px;top:345.5px;line-height:16px;height:16px;font-size:12px;color:#747474;font-weight:700;white-space:nowrap;width:100px;text-align:center;">15:27:00</div>
<div style="left:495.0px;top:360.5px;line-height:16px;height:16px;font-size:12px;color:#747474;font-weight:700;white-space:nowrap;width:100px;text-align:center;letter-spacing:.45px;">10/12/2024</div>
<div style="left:58px;top:191px;width:65px;height:2px;background:#10b4ee"></div>
</div>
<div class="win" style="left:1038px;top:290px;width:644px;height:362px">
<div style="left:0px;top:0px;width:644px;height:30px;background:#fff"></div>
<svg style="left:8px;top:7px" width="15" height="12" viewBox="0 0 44 26">
<g transform="skewX(-7)"><text x="4" y="24" font-family="Liberation Sans, sans-serif" font-size="27" font-weight="700" fill="#0b1b6e" stroke="#0b1b6e" stroke-width="2.4" textLength="33" lengthAdjust="spacingAndGlyphs">LS</text></g>
<path d="M31 3.500 Q38 0 44 0.500 L38 5 Q35 3 31 3.500Z" fill="#e8283c"/></svg>
<svg style="left:509px;top:0" width="137" height="30" viewBox="0 0 137 30" fill="none" stroke="#8a8a8a" stroke-width="1"><path d="M16 14.500h10"/><path d="M61.500 9.500h9v9h-9z"/><path d="M107.500 9.500l10 10M117.500 9.500l-10 10"/></svg>
<svg style="left:2.5px;top:32.19999999999999px" width="21" height="21" viewBox="0 0 24 24"><defs><linearGradient id="gg1038" x1="0" x2="0" y1="0" y2="1"><stop offset="0" stop-color="#1a3688"/><stop offset="1" stop-color="#3262dc"/></linearGradient></defs><path fill="url(#gg1038)" d="M19.140 12.940c.04-.3.060-.610.060-.940 0-.320-.020-.640-.070-.940l2.030-1.580a.49.490 0 00.120-.610l-1.920-3.320a.488.488 0 00-.590-.220l-2.390.960c-.5-.380-1.030-.7-1.620-.940l-.360-2.540a.484.484 0 00-.480-.410h-3.840c-.240 0-.430.170-.470.410l-.360 2.540c-.59.240-1.130.57-1.620.940l-2.390-.960c-.220-.080-.470 0-.590.220L2.740 8.870c-.12.210-.8.470.12.610l2.030 1.580c-.5.300-.9.630-.9.940s.2.640.7.940l-2.030 1.580a.49.490 0 00-.12.610l1.920 3.320c.12.220.37.290.59.220l2.390-.960c.5.380 1.030.7 1.620.940l.36 2.540c.5.240.24.410.48.410h3.840c.24 0 .44-.17.470-.410l.36-2.540c.59-.24 1.130-.56 1.620-.940l2.390.960c.22.080.47 0 .59-.220l1.920-3.320c.12-.22.070-.47-.12-.610l-2.010-1.580zM12 15.600c-1.980 0-3.600-1.620-3.600-3.600s1.620-3.600 3.600-3.600 3.600 1.620 3.600 3.600-1.620 3.600-3.600 3.600z"/></svg>
<div style="left:34px;top:35.7px;line-height:16px;height:16px;font-size:12px;color:#3b4c8c;font-weight:400;white-space:nowrap;">Tuesday, 10/12/2024</div>
<svg style="left:175.5px;top:36.69999999999999px" width="12" height="12" viewBox="0 0 12 12"><circle cx="6" cy="6" r="5.500" fill="#3d5cc0"/><path d="M6 2.500V6l2.300 1.600" stroke="#fff" stroke-width="1.200" fill="none"/></svg>
<div style="left:191px;top:35.7px;line-height:16px;height:16px;font-size:12px;color:#3b4c8c;font-weight:400;white-space:nowrap;transform:scaleX(0.95);transform-origin:0 50%;">15:23:22</div>
<div style="left:329.5px;top:36.3px;line-height:16px;height:16px;font-size:12px;color:#4e5a7c;font-weight:400;white-space:nowrap;transform:scaleX(0.955);transform-origin:0 50%;">[DB6.DBD68] Tundish No 2</div>
<div style="left:566px;top:41.69999999999999px;width:20px;height:2px;background:#10b4ee"></div>
<div style="left:590px;top:35.7px;line-height:16px;height:16px;font-size:12px;color:#3b4c8c;font-weight:400;white-space:nowrap;">26 points</div>
<div style="left:63.200000000000045px;top:64.39999999999998px;width:1px;height:258.6px;background:#e0e0e0"></div>
<div style="left:63.200000000000045px;top:318px;width:1px;height:5px;background:#777"></div>
<div style="left:179.5px;top:64.39999999999998px;width:1px;height:258.6px;background:#e0e0e0"></div>
<div style="left:179.5px;top:318px;width:1px;height:5px;background:#777"></div>
<div style="left:297.0999999999999px;top:64.39999999999998px;width:1px;height:258.6px;background:#e0e0e0"></div>
<div style="left:297.0999999999999px;top:318px;width:1px;height:5px;background:#777"></div>
<div style="left:412.5px;top:64.39999999999998px;width:1px;height:258.6px;background:#e0e0e0"></div>
<div style="left:412.5px;top:318px;width:1px;height:5px;background:#777"></div>
<div style="left:529.5px;top:64.39999999999998px;width:1px;height:258.6px;background:#e0e0e0"></div>
<div style="left:529.5px;top:318px;width:1px;height:5px;background:#777"></div>
<div style="left:56.5px;top:63.89999999999998px;width:582.5px;height:1px;background:#e6e6e6"></div>
<div style="left:56.5px;top:193.2px;width:582.5px;height:1px;background:#e0e0e0"></div>
<div style="left:56.0px;top:64.39999999999998px;width:1.2px;height:258.6px;background:#777"></div>
<div style="left:56.0px;top:322.5px;width:582.5px;height:1.2px;background:#777"></div>
<div style="left:49.5px;top:63.89999999999998px;width:7px;height:1px;background:#777"></div>
<div style="left:53.0px;top:89.75999999999998px;width:3.5px;height:1px;background:#777"></div>
<div style="left:53.0px;top:115.61999999999998px;width:3.5px;height:1px;background:#777"></div>
<div style="left:53.0px;top:141.48px;width:3.5px;height:1px;background:#777"></div>
<div style="left:53.0px;top:167.33999999999997px;width:3.5px;height:1px;background:#777"></div>
<div style="left:49.5px;top:193.2px;width:7px;height:1px;background:#777"></div>
<div style="left:53.0px;top:219.06px;width:3.5px;height:1px;background:#777"></div>
<div style="left:53.0px;top:244.92000000000002px;width:3.5px;height:1px;background:#777"></div>
<div style="left:53.0px;top:270.78px;width:3.5px;height:1px;background:#777"></div>
<div style="left:53.0px;top:296.64px;width:3.5px;height:1px;background:#777"></div>
<div style="left:49.5px;top:322.5px;width:7px;height:1px;background:#777"></div>
<div style="left:4.5px;top:56.9px;line-height:16px;height:16px;font-size:12.5px;color:#747474;font-weight:700;white-space:nowrap;width:40px;text-align:right;">100</div>
<div style="left:4.5px;top:186.2px;line-height:16px;height:16px;font-size:12.5px;color:#747474;font-weight:700;white-space:nowrap;width:40px;text-align:right;">50</div>
<div style="left:4.5px;top:315.5px;line-height:16px;height:16px;font-size:12.5px;color:#747474;font-weight:700;white-space:nowrap;width:40px;text-align:right;">0</div>
<div style="left:-2.5px;top:185.7px;width:40px;height:16px;line-height:16px;text-align:center;font-size:11px;font-weight:700;color:#7a7a7a;transform:rotate(-90deg);white-space:nowrap">[°C]</div>
<div style="left:11.700000000000045px;top:326.5px;line-height:16px;height:16px;font-size:12px;color:#747474;font-weight:700;white-space:nowrap;width:100px;text-align:center;">15:23:00</div>
<div style="left:12.700000000000045px;top:341.5px;line-height:16px;height:16px;font-size:12px;color:#747474;font-weight:700;white-space:nowrap;width:100px;text-align:center;letter-spacing:.45px;">10/12/2024</div>
<div style="left:128.0px;top:326.5px;line-height:16px;height:16px;font-size:12px;color:#747474;font-weight:700;white-space:nowrap;width:100px;text-align:center;">15:24:00</div>
<div style="left:129.0px;top:341.5px;line-height:16px;height:16px;font-size:12px;color:#747474;font-weight:700;white-space:nowrap;width:100px;text-align:center;letter-spacing:.45px;">10/12/2024</div>
<div style="left:245.5999999999999px;top:326.5px;line-height:16px;height:16px;font-size:12px;color:#747474;font-weight:700;white-space:nowrap;width:100px;text-align:center;">15:25:00</div>
<div style="left:246.5999999999999px;top:341.5px;line-height:16px;height:16px;font-size:12px;color:#747474;font-weight:700;white-space:nowrap;width:100px;text-align:center;letter-spacing:.45px;">10/12/2024</div>
<div style="left:361.0px;top:326.5px;line-height:16px;height:16px;font-size:12px;color:#747474;font-weight:700;white-space:nowrap;width:100px;text-align:center;">15:26:00</div>
<div style="left:362.0px;top:341.5px;line-height:16px;height:16px;font-size:12px;color:#747474;font-weight:700;white-space:nowrap;width:100px;text-align:center;letter-spacing:.45px;">10/12/2024</div>
<div style="left:478.0px;top:326.5px;line-height:16px;height:16px;font-size:12px;color:#747474;font-weight:700;white-space:nowrap;width:100px;text-align:center;">15:27:00</div>
<div style="left:479.0px;top:341.5px;line-height:16px;height:16px;font-size:12px;color:#747474;font-weight:700;white-space:nowrap;width:100px;text-align:center;letter-spacing:.45px;">10/12/2024</div>
<div style="left:58px;top:243.5px;width:49px;height:2px;background:#10b4ee"></div>
</div>
<div class="win" style="left:588px;top:722px;width:643px;height:376px">
<div style="left:0px;top:0px;width:643px;height:30px;background:#fff"></div>
<svg style="left:8px;top:7px" width="15" height="12" viewBox="0 0 44 26">
<g transform="skewX(-7)"><text x="4" y="24" font-family="Liberation Sans, sans-serif" font-size="27" font-weight="700" fill="#0b1b6e" stroke="#0b1b6e" stroke-width="2.4" textLength="33" lengthAdjust="spacingAndGlyphs">LS</text></g>
<path d="M31 3.500 Q38 0 44 0.500 L38 5 Q35 3 31 3.500Z" fill="#e8283c"/></svg>
<svg style="left:508px;top:0" width="137" height="30" viewBox="0 0 137 30" fill="none" stroke="#111" stroke-width="1.3"><path d="M16 14.500h10"/><path d="M61.500 9.500h9v9h-9z"/><path d="M107.500 9.500l10 10M117.500 9.500l-10 10"/></svg>
<svg style="left:1.5px;top:32.200000000000045px" width="21" height="21" viewBox="0 0 24 24"><defs><linearGradient id="gg588" x1="0" x2="0" y1="0" y2="1"><stop offset="0" stop-color="#1a3688"/><stop offset="1" stop-color="#3262dc"/></linearGradient></defs><path fill="url(#gg588)" d="M19.140 12.940c.04-.3.060-.610.060-.940 0-.320-.020-.640-.070-.940l2.030-1.580a.49.490 0 00.120-.610l-1.920-3.320a.488.488 0 00-.590-.220l-2.390.960c-.5-.380-1.030-.7-1.620-.940l-.360-2.540a.484.484 0 00-.480-.410h-3.840c-.240 0-.430.170-.470.410l-.360 2.540c-.59.240-1.130.57-1.620.940l-2.390-.960c-.220-.080-.470 0-.590.220L2.740 8.870c-.12.210-.8.470.12.610l2.030 1.580c-.5.300-.9.630-.9.940s.2.640.7.940l-2.030 1.580a.49.490 0 00-.12.610l1.920 3.320c.12.220.37.290.59.220l2.390-.960c.5.380 1.030.7 1.620.940l.36 2.540c.5.240.24.410.48.410h3.840c.24 0 .44-.17.470-.410l.36-2.540c.59-.24 1.130-.56 1.620-.940l2.390.960c.22.080.47 0 .59-.220l1.920-3.320c.12-.22.070-.47-.12-.610l-2.010-1.580zM12 15.600c-1.980 0-3.600-1.620-3.600-3.600s1.620-3.600 3.600-3.600 3.600 1.620 3.600 3.600-1.620 3.600-3.600 3.600z"/></svg>
<div style="left:33px;top:35.7px;line-height:16px;height:16px;font-size:12px;color:#3b4c8c;font-weight:400;white-space:nowrap;">Tuesday, 10/12/2024</div>
<svg style="left:174.5px;top:36.700000000000045px" width="12" height="12" viewBox="0 0 12 12"><circle cx="6" cy="6" r="5.500" fill="#3d5cc0"/><path d="M6 2.500V6l2.300 1.600" stroke="#fff" stroke-width="1.200" fill="none"/></svg>
<div style="left:190px;top:35.7px;line-height:16px;height:16px;font-size:12px;color:#3b4c8c;font-weight:400;white-space:nowrap;transform:scaleX(0.95);transform-origin:0 50%;">15:23:21</div>
<div style="left:297.5px;top:36.3px;line-height:16px;height:16px;font-size:12px;color:#4e5a7c;font-weight:400;white-space:nowrap;transform:scaleX(0.955);transform-origin:0 50%;">[DB29.DBD12] Cooling Water Flow #B1</div>
<div style="left:565.5px;top:41.700000000000045px;width:20px;height:2px;background:#10b4ee"></div>
<div style="left:589.5px;top:35.7px;line-height:16px;height:16px;font-size:12px;color:#3b4c8c;font-weight:400;white-space:nowrap;">20 points</div>
<div style="left:161.89999999999998px;top:64.5px;width:1px;height:277.29999999999995px;background:#e0e0e0"></div>
<div style="left:161.89999999999998px;top:336.79999999999995px;width:1px;height:5px;background:#777"></div>
<div style="left:272.5px;top:64.5px;width:1px;height:277.29999999999995px;background:#e0e0e0"></div>
<div style="left:272.5px;top:336.79999999999995px;width:1px;height:5px;background:#777"></div>
<div style="left:382.9px;top:64.5px;width:1px;height:277.29999999999995px;background:#e0e0e0"></div>
<div style="left:382.9px;top:336.79999999999995px;width:1px;height:5px;background:#777"></div>
<div style="left:493.5px;top:64.5px;width:1px;height:277.29999999999995px;background:#e0e0e0"></div>
<div style="left:493.5px;top:336.79999999999995px;width:1px;height:5px;background:#777"></div>
<div style="left:604.3px;top:64.5px;width:1px;height:277.29999999999995px;background:#e0e0e0"></div>
<div style="left:604.3px;top:336.79999999999995px;width:1px;height:5px;background:#777"></div>
<div style="left:55.5px;top:64.0px;width:551.5px;height:1px;background:#e6e6e6"></div>
<div style="left:55.5px;top:202.64999999999998px;width:551.5px;height:1px;background:#e0e0e0"></div>
<div style="left:55.0px;top:64.5px;width:1.2px;height:277.29999999999995px;background:#777"></div>
<div style="left:55.0px;top:341.29999999999995px;width:551.5px;height:1.2px;background:#777"></div>
<div style="left:48.5px;top:64.0px;width:7px;height:1px;background:#777"></div>
<div style="left:52.0px;top:91.72999999999999px;width:3.5px;height:1px;background:#777"></div>
<div style="left:52.0px;top:119.46px;width:3.5px;height:1px;background:#777"></div>
<div style="left:52.0px;top:147.19px;width:3.5px;height:1px;background:#777"></div>
<div style="left:52.0px;top:174.92px;width:3.5px;height:1px;background:#777"></div>
<div style="left:48.5px;top:202.64999999999998px;width:7px;height:1px;background:#777"></div>
<div style="left:52.0px;top:230.37999999999997px;width:3.5px;height:1px;background:#777"></div>
<div style="left:52.0px;top:258.10999999999996px;width:3.5px;height:1px;background:#777"></div>
<div style="left:52.0px;top:285.84px;width:3.5px;height:1px;background:#777"></div>
<div style="left:52.0px;top:313.57px;width:3.5px;height:1px;background:#777"></div>
<div style="left:48.5px;top:341.29999999999995px;width:7px;height:1px;background:#777"></div>
<div style="left:3.5px;top:57.0px;line-height:16px;height:16px;font-size:12.5px;color:#747474;font-weight:700;white-space:nowrap;width:40px;text-align:right;">100</div>
<div style="left:3.5px;top:195.6px;line-height:16px;height:16px;font-size:12.5px;color:#747474;font-weight:700;white-space:nowrap;width:40px;text-align:right;">50</div>
<div style="left:3.5px;top:334.3px;line-height:16px;height:16px;font-size:12.5px;color:#747474;font-weight:700;white-space:nowrap;width:40px;text-align:right;">0</div>
<div style="left:-3.5px;top:195.14999999999998px;width:40px;height:16px;line-height:16px;text-align:center;font-size:11px;font-weight:700;color:#7a7a7a;transform:rotate(-90deg);white-space:nowrap">[L/min]</div>
<div style="left:110.39999999999998px;top:345.3px;line-height:16px;height:16px;font-size:12px;color:#747474;font-weight:700;white-space:nowrap;width:100px;text-align:center;">15:24:00</div>
<div style="left:111.39999999999998px;top:360.3px;line-height:16px;height:16px;font-size:12px;color:#747474;font-weight:700;white-space:nowrap;width:100px;text-align:center;letter-spacing:.45px;">10/12/2024</div>
<div style="left:221.0px;top:345.3px;line-height:16px;height:16px;font-size:12px;color:#747474;font-weight:700;white-space:nowrap;width:100px;text-align:center;">15:25:00</div>
<div style="left:222.0px;top:360.3px;line-height:16px;height:16px;font-size:12px;color:#747474;font-weight:700;white-space:nowrap;width:100px;text-align:center;letter-spacing:.45px;">10/12/2024</div>
<div style="left:331.4px;top:345.3px;line-height:16px;height:16px;font-size:12px;color:#747474;font-weight:700;white-space:nowrap;width:100px;text-align:center;">15:26:00</div>
<div style="left:332.4px;top:360.3px;line-height:16px;height:16px;font-size:12px;color:#747474;font-weight:700;white-space:nowrap;width:100px;text-align:center;letter-spacing:.45px;">10/12/2024</div>
<div style="left:442.0px;top:345.3px;line-height:16px;height:16px;font-size:12px;color:#747474;font-weight:700;white-space:nowrap;width:100px;text-align:center;">15:27:00</div>
<div style="left:443.0px;top:360.3px;line-height:16px;height:16px;font-size:12px;color:#747474;font-weight:700;white-space:nowrap;width:100px;text-align:center;letter-spacing:.45px;">10/12/2024</div>
<div style="left:552.8px;top:345.3px;line-height:16px;height:16px;font-size:12px;color:#747474;font-weight:700;white-space:nowrap;width:100px;text-align:center;">15:28:00</div>
<div style="left:553.8px;top:360.3px;line-height:16px;height:16px;font-size:12px;color:#747474;font-weight:700;white-space:nowrap;width:100px;text-align:center;letter-spacing:.45px;">10/12/2024</div>
</div>
</div></body></html>
